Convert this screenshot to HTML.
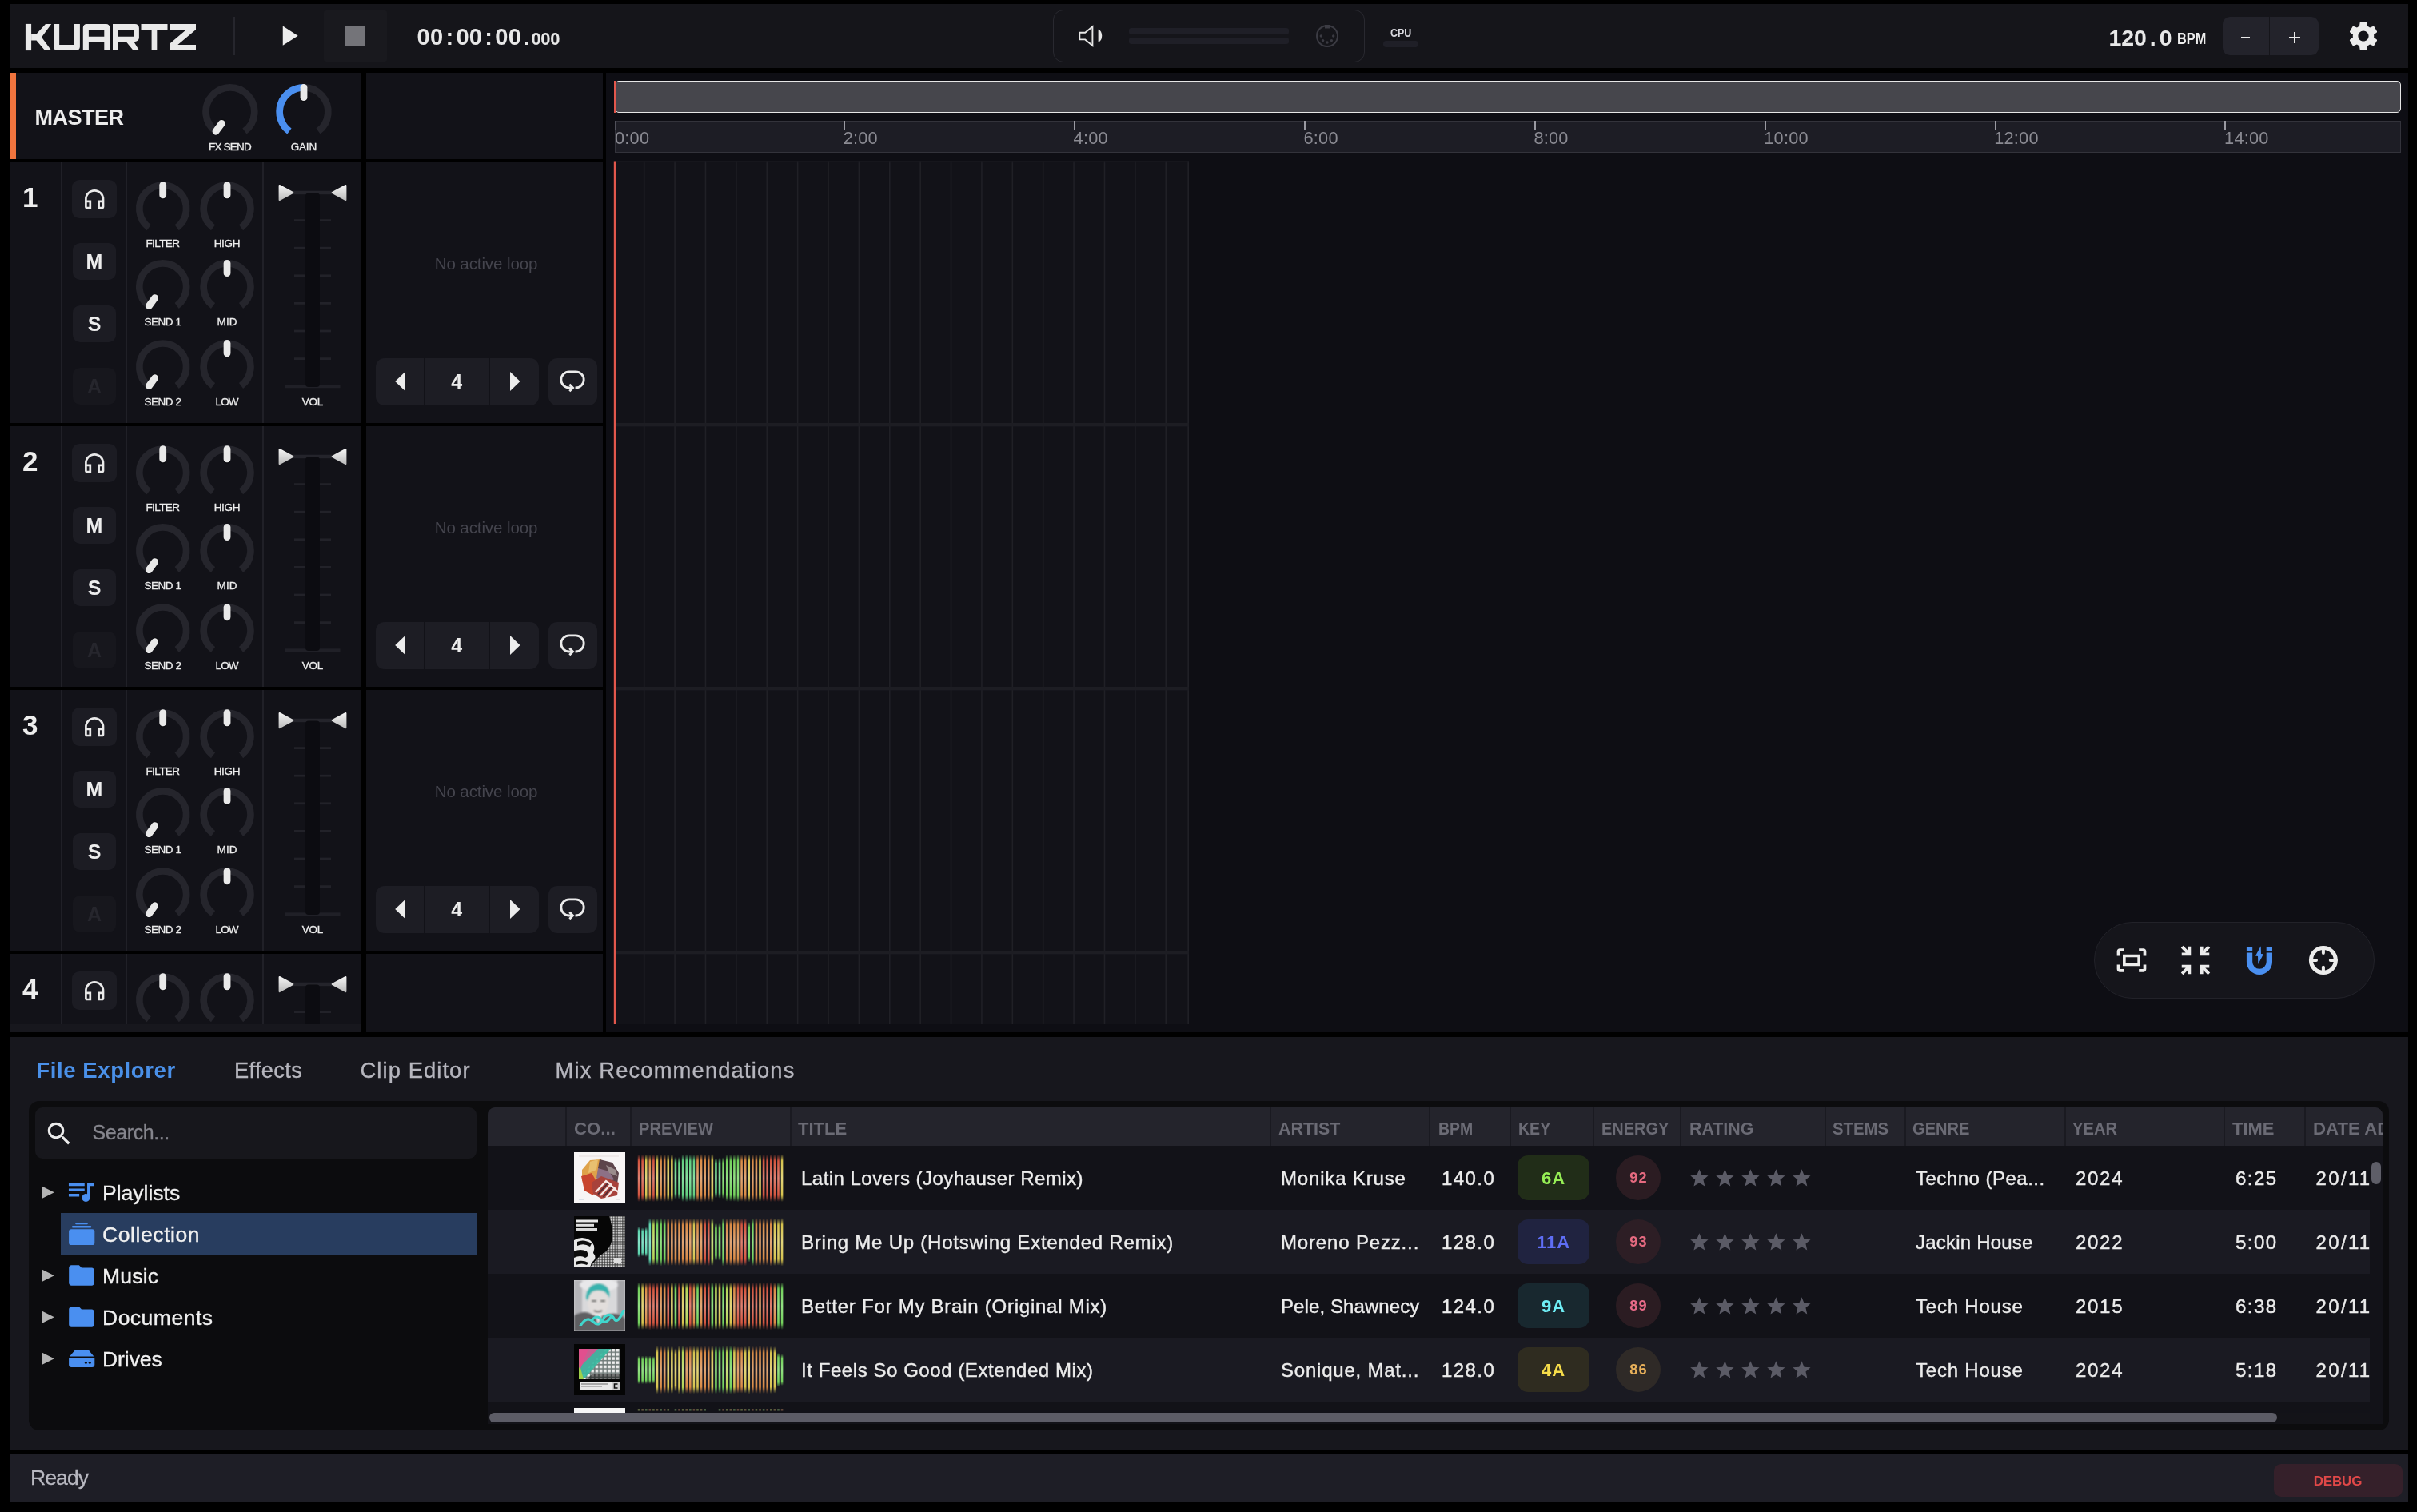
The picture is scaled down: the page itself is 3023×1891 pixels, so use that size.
<!DOCTYPE html>
<html><head><meta charset="utf-8"><title>Kuartz</title>
<style>
html,body{margin:0;padding:0;background:#000;}
body{width:3023px;height:1891px;position:relative;overflow:hidden;font-family:'Liberation Sans', sans-serif;}
div,svg{position:absolute;box-sizing:border-box;}
.t{white-space:nowrap;}
#root{left:0;top:0;width:3023px;height:1891px;will-change:transform;}
</style></head><body><div id="root">

<div style="left:12px;top:5px;width:3000px;height:80px;background:#15151a;"></div>
<svg style="left:0px;top:0px;" width="300" height="90" viewBox="0 0 300 90"><g fill="#e9e9e9" stroke="none" fill-rule="evenodd">
<rect x="31.9" y="29.9" width="7.2" height="33.2"/>
<polygon points="39.1,42.5 45.5,42.5 57,29.9 64.2,29.9 52,46.4 64.2,63.1 56.1,63.1 45.5,50.5 39.1,50.5"/>
<path d="M67,29.9 V58.6 a4.5,4.5 0 0 0 4.5,4.5 H95.4 a4.5,4.5 0 0 0 4.5,-4.5 V29.9 H92.8 V55.9 H74.15 V29.9 Z"/>
<path d="M103.8,63.1 V34.4 a4.5,4.5 0 0 1 4.5,-4.5 H132.8 a4.5,4.5 0 0 1 4.5,4.5 V63.1 H130.3 V52 H110.9 V63.1 Z M110.9,37.1 H130.3 V45.8 H110.9 Z"/>
<path d="M141,63.1 V29.9 H168.9 a5,5 0 0 1 5,5 V47 a5,5 0 0 1 -5,5 H167.3 L174,63.1 H166.7 L157.6,52 H147.9 V63.1 Z M147.9,37.1 H167 V45.8 H147.9 Z"/>
<path d="M176.5,29.9 H209.5 V36.9 H196.3 V63.1 H189.6 V36.9 H176.5 Z"/>
<path d="M212.1,29.9 H245 V36.9 L222.3,56.1 H245 V63.1 H212.1 V54.8 L233.1,36.9 H212.1 Z"/>
</g></svg>
<div style="left:292px;top:21px;width:2px;height:48px;background:#26262d;"></div>
<svg style="left:340.2px;top:24.4px;" width="41.3" height="41.3" viewBox="0 0 24 24"><path fill="#ededed" d="M8 5v14l11-7z"/></svg>
<div style="left:404.5px;top:12.5px;width:79.5px;height:64px;background:#19191e;border-radius:3px;"></div>
<div style="left:432px;top:33px;width:24px;height:24px;background:#747479;"></div>
<div class="t" style="left:521.5px;top:32.19px;font-size:29px;line-height:29px;color:#e8e8e8;font-weight:700;"><span style="display:inline-block;width:16.3px;text-align:center">0</span><span style="display:inline-block;width:16.3px;text-align:center">0</span><span style="display:inline-block;width:16.3px;text-align:center">:</span><span style="display:inline-block;width:16.3px;text-align:center">0</span><span style="display:inline-block;width:16.3px;text-align:center">0</span><span style="display:inline-block;width:16.3px;text-align:center">:</span><span style="display:inline-block;width:16.3px;text-align:center">0</span><span style="display:inline-block;width:16.3px;text-align:center">0</span></div>
<div class="t" style="left:652.5px;top:38.02px;font-size:22px;line-height:22px;color:#e8e8e8;font-weight:700;"><span style="display:inline-block;width:11.9px;text-align:center">.</span><span style="display:inline-block;width:11.9px;text-align:center">0</span><span style="display:inline-block;width:11.9px;text-align:center">0</span><span style="display:inline-block;width:11.9px;text-align:center">0</span></div>
<div style="left:1317px;top:12px;width:390px;height:66px;border:1.5px solid #292930;border-radius:13px;"></div>
<svg style="left:1340px;top:25px;" width="46" height="40" viewBox="1340 25 46 40"><path d="M1350.3 40.7 H1357.2 L1366.4 33.2 V56.9 L1357.2 49.4 H1350.3 Z" fill="none" stroke="#e6e6e6" stroke-width="1.9" stroke-linejoin="miter"/><path d="M1373.6 36.8 A5.2 8 0 0 1 1373.6 52.7 Z" fill="#e6e6e6"/></svg>
<div style="left:1412.4px;top:35.4px;width:199.6px;height:8px;background:#1f1f27;border-radius:3px;"></div>
<div style="left:1412.4px;top:46.7px;width:199.6px;height:8px;background:#1f1f27;border-radius:3px;"></div>
<svg style="left:1644px;top:29px;" width="32" height="32" viewBox="0 0 32 32"><circle cx="16" cy="16" r="13" fill="none" stroke="#3b3b43" stroke-width="2"/>
<rect x="13" y="2" width="6" height="4.5" fill="#3b3b43"/>
<g fill="#3b3b43"><circle cx="8.3" cy="16" r="1.7"/><circle cx="23.7" cy="16" r="1.7"/><circle cx="10.6" cy="21.6" r="1.7"/><circle cx="21.4" cy="21.6" r="1.7"/><circle cx="16" cy="24" r="1.7"/></g></svg>
<div class="t" style="left:1738.6px;top:33.1px;font-size:15px;line-height:15px;color:#d8d8de;font-weight:700;transform-origin:0 0;transform:scaleX(0.83);">CPU</div>
<div style="left:1730px;top:51.3px;width:44px;height:7.4px;background:#1f1f27;border-radius:3.7px;"></div>
<div class="t" style="left:2637.5px;top:32.65px;font-size:28.5px;line-height:28.5px;color:#e8e8e8;font-weight:700;"><span style="display:inline-block;width:15.8px;text-align:center">1</span><span style="display:inline-block;width:15.8px;text-align:center">2</span><span style="display:inline-block;width:15.8px;text-align:center">0</span><span style="display:inline-block;width:15.8px;text-align:center">.</span><span style="display:inline-block;width:15.8px;text-align:center">0</span></div>
<div class="t" style="left:2722.7px;top:38.9px;font-size:19.4px;line-height:19.4px;color:#ededed;font-weight:700;transform-origin:0 0;transform:scaleX(0.84);">BPM</div>
<div style="left:2780px;top:21px;width:120px;height:48px;background:#23232b;border-radius:9px;"></div>
<div style="left:2837.5px;top:21px;width:1.5px;height:48px;background:#15151a;"></div>
<div style="left:2803.4px;top:45.8px;width:11px;height:2.4px;background:#e8e8e8;"></div>
<div style="left:2863.4px;top:45.8px;width:13.4px;height:2.4px;background:#e8e8e8;"></div>
<div style="left:2868.9px;top:40px;width:2.4px;height:14px;background:#e8e8e8;"></div>
<svg style="left:2934px;top:22.5px;" width="44" height="44" viewBox="0 0 24 24"><path fill="#ececec" d="M19.14 12.94c.04-.3.06-.61.06-.94 0-.32-.02-.64-.07-.94l2.03-1.58c.18-.14.23-.41.12-.61l-1.92-3.32c-.12-.22-.37-.29-.59-.22l-2.39.96c-.5-.38-1.03-.7-1.62-.94l-.36-2.54c-.04-.24-.24-.41-.48-.41h-3.84c-.24 0-.43.17-.47.41l-.36 2.54c-.59.24-1.13.57-1.62.94l-2.39-.96c-.22-.08-.47 0-.59.22L2.74 8.87c-.12.21-.08.47.12.61l2.03 1.58c-.05.3-.09.63-.09.94s.02.64.07.94l-2.03 1.58c-.18.14-.23.41-.12.61l1.92 3.32c.12.22.37.29.59.22l2.39-.96c.5.38 1.03.7 1.62.94l.36 2.54c.05.24.24.41.48.41h3.84c.24 0 .44-.17.47-.41l.36-2.54c.59-.24 1.13-.56 1.62-.94l2.39.96c.22.08.47 0 .59-.22l1.92-3.32c.12-.22.07-.47-.12-.61l-2.01-1.58zM12 15.6c-1.98 0-3.6-1.62-3.6-3.6s1.62-3.6 3.6-3.6 3.6 1.62 3.6 3.6-1.62 3.6-3.6 3.6z"/></svg>
<div style="left:12px;top:91px;width:440px;height:107.8px;background:#121218;"></div>
<div style="left:12px;top:91px;width:8px;height:107.8px;background:#f0743e;"></div>
<div style="left:458px;top:91px;width:296px;height:107.8px;background:#121218;"></div>
<div class="t" style="top:134.23px;font-size:27px;line-height:27px;color:#ececec;font-weight:700;letter-spacing:-0.46px;left:43.4px;">MASTER</div>
<svg style="left:12px;top:91px" width="440" height="108" viewBox="12 91 440 108"><path d="M269.85,164.10 A30.35,30.35 0 1 1 305.95,164.10" fill="none" stroke="#25252c" stroke-width="8.7"/><g transform="rotate(-144 287.9 139.7)"><rect x="283.50" y="106.35" width="8.8" height="21.1" rx="4.4" fill="#000" opacity="0.35"/><rect x="283.50" y="104.95" width="8.8" height="21.1" rx="4.4" fill="#e9e9e9"/></g><path d="M361.95,164.10 A30.35,30.35 0 1 1 398.05,164.10" fill="none" stroke="#25252c" stroke-width="8.7"/><path d="M361.95,164.10 A30.35,30.35 0 0 1 380.00,109.35" fill="none" stroke="#4a8ff0" stroke-width="8.7"/><g transform="rotate(0 380 139.7)"><rect x="375.60" y="106.35" width="8.8" height="21.1" rx="4.4" fill="#000" opacity="0.35"/><rect x="375.60" y="104.95" width="8.8" height="21.1" rx="4.4" fill="#e9e9e9"/></g></svg>
<div class="t" style="top:177.21px;font-size:13.5px;line-height:13.5px;color:#ececec;letter-spacing:-0.785px;left:287.508px;transform:translateX(-50%);-webkit-text-stroke:0.3px #ececec;">FX SEND</div>
<div class="t" style="top:177.21px;font-size:13.5px;line-height:13.5px;color:#ececec;letter-spacing:-0.235px;left:379.883px;transform:translateX(-50%);-webkit-text-stroke:0.3px #ececec;">GAIN</div>
<svg width="0" height="0" style="left:0;top:0"><defs><linearGradient id="tg" x1="0" y1="0" x2="0" y2="1"><stop offset="0" stop-color="#f4f4f4"/><stop offset="1" stop-color="#bdbdbd"/></linearGradient></defs></svg>
<svg width="0" height="0" style="left:0;top:0"><defs><linearGradient id="wr" x1="0" y1="0" x2="0" y2="1"><stop offset="0" stop-color="#d4553f" stop-opacity="0"/><stop offset="0.14" stop-color="#d4553f"/><stop offset="0.5" stop-color="#dd8070"/><stop offset="0.86" stop-color="#d4553f"/><stop offset="1" stop-color="#d4553f" stop-opacity="0"/></linearGradient><linearGradient id="wo" x1="0" y1="0" x2="0" y2="1"><stop offset="0" stop-color="#d98a45" stop-opacity="0"/><stop offset="0.14" stop-color="#d98a45"/><stop offset="0.5" stop-color="#e0a676"/><stop offset="0.86" stop-color="#d98a45"/><stop offset="1" stop-color="#d98a45" stop-opacity="0"/></linearGradient><linearGradient id="wy" x1="0" y1="0" x2="0" y2="1"><stop offset="0" stop-color="#d6c34e" stop-opacity="0"/><stop offset="0.14" stop-color="#d6c34e"/><stop offset="0.5" stop-color="#e2d47c"/><stop offset="0.86" stop-color="#d6c34e"/><stop offset="1" stop-color="#d6c34e" stop-opacity="0"/></linearGradient><linearGradient id="wg" x1="0" y1="0" x2="0" y2="1"><stop offset="0" stop-color="#73d15c" stop-opacity="0"/><stop offset="0.14" stop-color="#73d15c"/><stop offset="0.5" stop-color="#93e084"/><stop offset="0.86" stop-color="#73d15c"/><stop offset="1" stop-color="#73d15c" stop-opacity="0"/></linearGradient><linearGradient id="wc" x1="0" y1="0" x2="0" y2="1"><stop offset="0" stop-color="#5fd6b0" stop-opacity="0"/><stop offset="0.14" stop-color="#5fd6b0"/><stop offset="0.5" stop-color="#86e2c8"/><stop offset="0.86" stop-color="#5fd6b0"/><stop offset="1" stop-color="#5fd6b0" stop-opacity="0"/></linearGradient><linearGradient id="wt" x1="0" y1="0" x2="0" y2="1"><stop offset="0" stop-color="#62cf80" stop-opacity="0"/><stop offset="0.14" stop-color="#62cf80"/><stop offset="0.5" stop-color="#88dea0"/><stop offset="0.86" stop-color="#62cf80"/><stop offset="1" stop-color="#62cf80" stop-opacity="0"/></linearGradient><linearGradient id="wl" x1="0" y1="0" x2="0" y2="1"><stop offset="0" stop-color="#b4d455" stop-opacity="0"/><stop offset="0.14" stop-color="#b4d455"/><stop offset="0.5" stop-color="#c8e080"/><stop offset="0.86" stop-color="#b4d455"/><stop offset="1" stop-color="#b4d455" stop-opacity="0"/></linearGradient><filter id="wbl" x="-5%" y="-5%" width="110%" height="110%"><feGaussianBlur stdDeviation="0.5 0.6"/></filter></defs><defs><filter id="cbl" x="-5%" y="-5%" width="110%" height="110%"><feGaussianBlur stdDeviation="0.55"/></filter><filter id="cbl2" x="-5%" y="-5%" width="110%" height="110%"><feGaussianBlur stdDeviation="1.3"/></filter><pattern id="dots" width="3.2" height="3.2" patternUnits="userSpaceOnUse"><rect width="3.2" height="3.2" fill="#4a4a4a"/><circle cx="1.6" cy="1.6" r="1.15" fill="#d2d2d2"/></pattern><pattern id="chk" width="5.2" height="5.2" patternUnits="userSpaceOnUse"><rect width="5.2" height="5.2" fill="#6f7a78"/><rect x="0.6" y="0.6" width="3.6" height="3.6" fill="#f0f0f0"/></pattern></defs></svg>
<div style="left:12px;top:203px;width:742px;height:326px;overflow:hidden;">
<div style="left:0px;top:0px;width:440px;height:326px;background:#121218;"></div>
<div style="left:446px;top:0px;width:296px;height:326px;background:#121218;"></div>
<div style="left:64.4px;top:0px;width:1.5px;height:326px;background:#202027;"></div>
<div style="left:145.7px;top:0px;width:1.5px;height:326px;background:#202027;"></div>
<div style="left:316.3px;top:0px;width:1.5px;height:326px;background:#202027;"></div>
<div class="t" style="top:26.49px;font-size:35px;line-height:35px;color:#ededed;font-weight:700;left:25.8px;transform:translateX(-50%);">1</div>
<div style="left:78px;top:22px;width:56px;height:48px;background:#1c1c23;border-radius:9px;"></div>
<svg style="left:89.9px;top:29.8px;" width="32.4" height="32.4" viewBox="0 0 24 24"><path fill="#eaeaea" d="M12 3a9 9 0 0 0-9 9v7c0 1.1.9 2 2 2h4v-8H5v-1c0-3.87 3.13-7 7-7s7 3.13 7 7v1h-4v8h4c1.1 0 2-.9 2-2v-7a9 9 0 0 0-9-9zM7 15v4H5v-4h2zm12 4h-2v-4h2v4z"/></svg>
<div style="left:79px;top:101px;width:54px;height:46px;background:#1c1c23;border-radius:9px;"></div>
<div class="t" style="top:112.06px;font-size:25px;line-height:25px;color:#ededed;font-weight:700;left:106px;transform:translateX(-50%);">M</div>
<div style="left:79px;top:179px;width:54px;height:46px;background:#1c1c23;border-radius:9px;"></div>
<div class="t" style="top:190.06px;font-size:25px;line-height:25px;color:#ededed;font-weight:700;left:106px;transform:translateX(-50%);">S</div>
<div style="left:79px;top:257px;width:54px;height:46px;background:#17171d;border-radius:9px;"></div>
<div class="t" style="top:268.06px;font-size:25px;line-height:25px;color:#26262d;font-weight:700;left:106px;transform:translateX(-50%);">A</div>
<svg style="left:0;top:0" width="742" height="326" viewBox="12 0 742 326"><path d="M186.21,81.63 A29.4,29.4 0 1 1 221.19,81.63" fill="none" stroke="#25252c" stroke-width="8.7"/><g transform="rotate(0 203.7 58)"><rect x="199.30" y="25.60" width="8.8" height="21.1" rx="4.4" fill="#000" opacity="0.35"/><rect x="199.30" y="24.20" width="8.8" height="21.1" rx="4.4" fill="#e9e9e9"/></g><path d="M266.56,81.63 A29.4,29.4 0 1 1 301.54,81.63" fill="none" stroke="#25252c" stroke-width="8.7"/><g transform="rotate(0 284.05 58)"><rect x="279.65" y="25.60" width="8.8" height="21.1" rx="4.4" fill="#000" opacity="0.35"/><rect x="279.65" y="24.20" width="8.8" height="21.1" rx="4.4" fill="#e9e9e9"/></g><path d="M186.21,179.43 A29.4,29.4 0 1 1 221.19,179.43" fill="none" stroke="#25252c" stroke-width="8.7"/><g transform="rotate(-144 203.7 155.8)"><rect x="199.30" y="123.40" width="8.8" height="21.1" rx="4.4" fill="#000" opacity="0.35"/><rect x="199.30" y="122.00" width="8.8" height="21.1" rx="4.4" fill="#e9e9e9"/></g><path d="M266.56,179.43 A29.4,29.4 0 1 1 301.54,179.43" fill="none" stroke="#25252c" stroke-width="8.7"/><g transform="rotate(0 284.05 155.8)"><rect x="279.65" y="123.40" width="8.8" height="21.1" rx="4.4" fill="#000" opacity="0.35"/><rect x="279.65" y="122.00" width="8.8" height="21.1" rx="4.4" fill="#e9e9e9"/></g><path d="M186.21,279.53 A29.4,29.4 0 1 1 221.19,279.53" fill="none" stroke="#25252c" stroke-width="8.7"/><g transform="rotate(-144 203.7 255.9)"><rect x="199.30" y="223.50" width="8.8" height="21.1" rx="4.4" fill="#000" opacity="0.35"/><rect x="199.30" y="222.10" width="8.8" height="21.1" rx="4.4" fill="#e9e9e9"/></g><path d="M266.56,279.53 A29.4,29.4 0 1 1 301.54,279.53" fill="none" stroke="#25252c" stroke-width="8.7"/><g transform="rotate(0 284.05 255.9)"><rect x="279.65" y="223.50" width="8.8" height="21.1" rx="4.4" fill="#000" opacity="0.35"/><rect x="279.65" y="222.10" width="8.8" height="21.1" rx="4.4" fill="#e9e9e9"/></g><rect x="367" y="35.7" width="48" height="4.5" fill="#24242b"/><rect x="356.5" y="278.3" width="69" height="4" fill="#202027"/><rect x="368" y="71.19999999999999" width="46" height="2.8" fill="#222229"/><rect x="368" y="105.8" width="46" height="2.8" fill="#222229"/><rect x="368" y="140.4" width="46" height="2.8" fill="#222229"/><rect x="368" y="175.0" width="46" height="2.8" fill="#222229"/><rect x="368" y="209.6" width="46" height="2.8" fill="#222229"/><rect x="368" y="244.2" width="46" height="2.8" fill="#222229"/><rect x="382" y="38.4" width="18" height="242.6" rx="4" fill="#0c0c11"/><path d="M349.6,28.9 L366.3,38 L349.6,47.1 Z" fill="url(#tg)" stroke="url(#tg)" stroke-width="2" stroke-linejoin="round"/><path d="M432.4,28.9 L415.7,38 L432.4,47.1 Z" fill="url(#tg)" stroke="url(#tg)" stroke-width="2" stroke-linejoin="round"/></svg>
<div class="t" style="top:94.61px;font-size:13.5px;line-height:13.5px;color:#ececec;letter-spacing:-0.581px;left:191.41px;transform:translateX(-50%);-webkit-text-stroke:0.3px #ececec;">FILTER</div>
<div class="t" style="top:94.61px;font-size:13.5px;line-height:13.5px;color:#ececec;letter-spacing:-0.317px;left:271.892px;transform:translateX(-50%);-webkit-text-stroke:0.3px #ececec;">HIGH</div>
<div class="t" style="top:192.71px;font-size:13.5px;line-height:13.5px;color:#ececec;letter-spacing:-0.453px;left:191.473px;transform:translateX(-50%);-webkit-text-stroke:0.3px #ececec;">SEND 1</div>
<div class="t" style="top:192.71px;font-size:13.5px;line-height:13.5px;color:#ececec;letter-spacing:0.127px;left:272.113px;transform:translateX(-50%);-webkit-text-stroke:0.3px #ececec;">MID</div>
<div class="t" style="top:292.81px;font-size:13.5px;line-height:13.5px;color:#ececec;letter-spacing:-0.453px;left:191.473px;transform:translateX(-50%);-webkit-text-stroke:0.3px #ececec;">SEND 2</div>
<div class="t" style="top:292.81px;font-size:13.5px;line-height:13.5px;color:#ececec;letter-spacing:-0.825px;left:271.637px;transform:translateX(-50%);-webkit-text-stroke:0.3px #ececec;">LOW</div>
<div class="t" style="top:292.91px;font-size:13.5px;line-height:13.5px;color:#ececec;letter-spacing:-0.256px;left:378.872px;transform:translateX(-50%);-webkit-text-stroke:0.3px #ececec;">VOL</div>
<div class="t" style="top:116.89px;font-size:20.5px;line-height:20.5px;color:#44444d;letter-spacing:-0.093px;left:596px;transform:translateX(-50%);">No active loop</div>
<div style="left:458px;top:244.5px;width:204px;height:59.5px;background:#1d1d24;border-radius:11px;"></div>
<div style="left:517.6px;top:244.5px;width:1.6px;height:59.5px;background:#121218;"></div>
<div style="left:599.8px;top:244.5px;width:1.6px;height:59.5px;background:#121218;"></div>
<svg style="left:0;top:0" width="742" height="326" viewBox="12 0 742 326"><path d="M506.7,262 L494.2,274 L506.7,286 Z" fill="#ececec"/><path d="M638,262 L650.5,274 L638,286 Z" fill="#ececec"/></svg>
<div class="t" style="top:262.36px;font-size:25px;line-height:25px;color:#ececec;font-weight:700;left:559.2px;transform:translateX(-50%);">4</div>
<div style="left:674px;top:244.5px;width:60.5px;height:59.5px;background:#1d1d24;border-radius:11px;"></div>
<svg style="left:687px;top:257.5px;" width="34" height="34" viewBox="0 0 24 24"><path d="M11.6 16.95 H9.1 A7.1 7.1 0 0 1 9.1 2.75 H14.9 A7.1 7.1 0 0 1 14.9 16.95 H14.5" fill="none" stroke="#ececec" stroke-width="2"/><path d="M9.4 13.9 L12.4 16.95 L9.4 20" fill="none" stroke="#ececec" stroke-width="2"/></svg>
</div>
<div style="left:12px;top:533px;width:742px;height:326px;overflow:hidden;">
<div style="left:0px;top:0px;width:440px;height:326px;background:#121218;"></div>
<div style="left:446px;top:0px;width:296px;height:326px;background:#121218;"></div>
<div style="left:64.4px;top:0px;width:1.5px;height:326px;background:#202027;"></div>
<div style="left:145.7px;top:0px;width:1.5px;height:326px;background:#202027;"></div>
<div style="left:316.3px;top:0px;width:1.5px;height:326px;background:#202027;"></div>
<div class="t" style="top:26.49px;font-size:35px;line-height:35px;color:#ededed;font-weight:700;left:25.8px;transform:translateX(-50%);">2</div>
<div style="left:78px;top:22px;width:56px;height:48px;background:#1c1c23;border-radius:9px;"></div>
<svg style="left:89.9px;top:29.8px;" width="32.4" height="32.4" viewBox="0 0 24 24"><path fill="#eaeaea" d="M12 3a9 9 0 0 0-9 9v7c0 1.1.9 2 2 2h4v-8H5v-1c0-3.87 3.13-7 7-7s7 3.13 7 7v1h-4v8h4c1.1 0 2-.9 2-2v-7a9 9 0 0 0-9-9zM7 15v4H5v-4h2zm12 4h-2v-4h2v4z"/></svg>
<div style="left:79px;top:101px;width:54px;height:46px;background:#1c1c23;border-radius:9px;"></div>
<div class="t" style="top:112.06px;font-size:25px;line-height:25px;color:#ededed;font-weight:700;left:106px;transform:translateX(-50%);">M</div>
<div style="left:79px;top:179px;width:54px;height:46px;background:#1c1c23;border-radius:9px;"></div>
<div class="t" style="top:190.06px;font-size:25px;line-height:25px;color:#ededed;font-weight:700;left:106px;transform:translateX(-50%);">S</div>
<div style="left:79px;top:257px;width:54px;height:46px;background:#17171d;border-radius:9px;"></div>
<div class="t" style="top:268.06px;font-size:25px;line-height:25px;color:#26262d;font-weight:700;left:106px;transform:translateX(-50%);">A</div>
<svg style="left:0;top:0" width="742" height="326" viewBox="12 0 742 326"><path d="M186.21,81.63 A29.4,29.4 0 1 1 221.19,81.63" fill="none" stroke="#25252c" stroke-width="8.7"/><g transform="rotate(0 203.7 58)"><rect x="199.30" y="25.60" width="8.8" height="21.1" rx="4.4" fill="#000" opacity="0.35"/><rect x="199.30" y="24.20" width="8.8" height="21.1" rx="4.4" fill="#e9e9e9"/></g><path d="M266.56,81.63 A29.4,29.4 0 1 1 301.54,81.63" fill="none" stroke="#25252c" stroke-width="8.7"/><g transform="rotate(0 284.05 58)"><rect x="279.65" y="25.60" width="8.8" height="21.1" rx="4.4" fill="#000" opacity="0.35"/><rect x="279.65" y="24.20" width="8.8" height="21.1" rx="4.4" fill="#e9e9e9"/></g><path d="M186.21,179.43 A29.4,29.4 0 1 1 221.19,179.43" fill="none" stroke="#25252c" stroke-width="8.7"/><g transform="rotate(-144 203.7 155.8)"><rect x="199.30" y="123.40" width="8.8" height="21.1" rx="4.4" fill="#000" opacity="0.35"/><rect x="199.30" y="122.00" width="8.8" height="21.1" rx="4.4" fill="#e9e9e9"/></g><path d="M266.56,179.43 A29.4,29.4 0 1 1 301.54,179.43" fill="none" stroke="#25252c" stroke-width="8.7"/><g transform="rotate(0 284.05 155.8)"><rect x="279.65" y="123.40" width="8.8" height="21.1" rx="4.4" fill="#000" opacity="0.35"/><rect x="279.65" y="122.00" width="8.8" height="21.1" rx="4.4" fill="#e9e9e9"/></g><path d="M186.21,279.53 A29.4,29.4 0 1 1 221.19,279.53" fill="none" stroke="#25252c" stroke-width="8.7"/><g transform="rotate(-144 203.7 255.9)"><rect x="199.30" y="223.50" width="8.8" height="21.1" rx="4.4" fill="#000" opacity="0.35"/><rect x="199.30" y="222.10" width="8.8" height="21.1" rx="4.4" fill="#e9e9e9"/></g><path d="M266.56,279.53 A29.4,29.4 0 1 1 301.54,279.53" fill="none" stroke="#25252c" stroke-width="8.7"/><g transform="rotate(0 284.05 255.9)"><rect x="279.65" y="223.50" width="8.8" height="21.1" rx="4.4" fill="#000" opacity="0.35"/><rect x="279.65" y="222.10" width="8.8" height="21.1" rx="4.4" fill="#e9e9e9"/></g><rect x="367" y="35.7" width="48" height="4.5" fill="#24242b"/><rect x="356.5" y="278.3" width="69" height="4" fill="#202027"/><rect x="368" y="71.19999999999999" width="46" height="2.8" fill="#222229"/><rect x="368" y="105.8" width="46" height="2.8" fill="#222229"/><rect x="368" y="140.4" width="46" height="2.8" fill="#222229"/><rect x="368" y="175.0" width="46" height="2.8" fill="#222229"/><rect x="368" y="209.6" width="46" height="2.8" fill="#222229"/><rect x="368" y="244.2" width="46" height="2.8" fill="#222229"/><rect x="382" y="38.4" width="18" height="242.6" rx="4" fill="#0c0c11"/><path d="M349.6,28.9 L366.3,38 L349.6,47.1 Z" fill="url(#tg)" stroke="url(#tg)" stroke-width="2" stroke-linejoin="round"/><path d="M432.4,28.9 L415.7,38 L432.4,47.1 Z" fill="url(#tg)" stroke="url(#tg)" stroke-width="2" stroke-linejoin="round"/></svg>
<div class="t" style="top:94.61px;font-size:13.5px;line-height:13.5px;color:#ececec;letter-spacing:-0.581px;left:191.41px;transform:translateX(-50%);-webkit-text-stroke:0.3px #ececec;">FILTER</div>
<div class="t" style="top:94.61px;font-size:13.5px;line-height:13.5px;color:#ececec;letter-spacing:-0.317px;left:271.892px;transform:translateX(-50%);-webkit-text-stroke:0.3px #ececec;">HIGH</div>
<div class="t" style="top:192.71px;font-size:13.5px;line-height:13.5px;color:#ececec;letter-spacing:-0.453px;left:191.473px;transform:translateX(-50%);-webkit-text-stroke:0.3px #ececec;">SEND 1</div>
<div class="t" style="top:192.71px;font-size:13.5px;line-height:13.5px;color:#ececec;letter-spacing:0.127px;left:272.113px;transform:translateX(-50%);-webkit-text-stroke:0.3px #ececec;">MID</div>
<div class="t" style="top:292.81px;font-size:13.5px;line-height:13.5px;color:#ececec;letter-spacing:-0.453px;left:191.473px;transform:translateX(-50%);-webkit-text-stroke:0.3px #ececec;">SEND 2</div>
<div class="t" style="top:292.81px;font-size:13.5px;line-height:13.5px;color:#ececec;letter-spacing:-0.825px;left:271.637px;transform:translateX(-50%);-webkit-text-stroke:0.3px #ececec;">LOW</div>
<div class="t" style="top:292.91px;font-size:13.5px;line-height:13.5px;color:#ececec;letter-spacing:-0.256px;left:378.872px;transform:translateX(-50%);-webkit-text-stroke:0.3px #ececec;">VOL</div>
<div class="t" style="top:116.89px;font-size:20.5px;line-height:20.5px;color:#44444d;letter-spacing:-0.093px;left:596px;transform:translateX(-50%);">No active loop</div>
<div style="left:458px;top:244.5px;width:204px;height:59.5px;background:#1d1d24;border-radius:11px;"></div>
<div style="left:517.6px;top:244.5px;width:1.6px;height:59.5px;background:#121218;"></div>
<div style="left:599.8px;top:244.5px;width:1.6px;height:59.5px;background:#121218;"></div>
<svg style="left:0;top:0" width="742" height="326" viewBox="12 0 742 326"><path d="M506.7,262 L494.2,274 L506.7,286 Z" fill="#ececec"/><path d="M638,262 L650.5,274 L638,286 Z" fill="#ececec"/></svg>
<div class="t" style="top:262.36px;font-size:25px;line-height:25px;color:#ececec;font-weight:700;left:559.2px;transform:translateX(-50%);">4</div>
<div style="left:674px;top:244.5px;width:60.5px;height:59.5px;background:#1d1d24;border-radius:11px;"></div>
<svg style="left:687px;top:257.5px;" width="34" height="34" viewBox="0 0 24 24"><path d="M11.6 16.95 H9.1 A7.1 7.1 0 0 1 9.1 2.75 H14.9 A7.1 7.1 0 0 1 14.9 16.95 H14.5" fill="none" stroke="#ececec" stroke-width="2"/><path d="M9.4 13.9 L12.4 16.95 L9.4 20" fill="none" stroke="#ececec" stroke-width="2"/></svg>
</div>
<div style="left:12px;top:863px;width:742px;height:326px;overflow:hidden;">
<div style="left:0px;top:0px;width:440px;height:326px;background:#121218;"></div>
<div style="left:446px;top:0px;width:296px;height:326px;background:#121218;"></div>
<div style="left:64.4px;top:0px;width:1.5px;height:326px;background:#202027;"></div>
<div style="left:145.7px;top:0px;width:1.5px;height:326px;background:#202027;"></div>
<div style="left:316.3px;top:0px;width:1.5px;height:326px;background:#202027;"></div>
<div class="t" style="top:26.49px;font-size:35px;line-height:35px;color:#ededed;font-weight:700;left:25.8px;transform:translateX(-50%);">3</div>
<div style="left:78px;top:22px;width:56px;height:48px;background:#1c1c23;border-radius:9px;"></div>
<svg style="left:89.9px;top:29.8px;" width="32.4" height="32.4" viewBox="0 0 24 24"><path fill="#eaeaea" d="M12 3a9 9 0 0 0-9 9v7c0 1.1.9 2 2 2h4v-8H5v-1c0-3.87 3.13-7 7-7s7 3.13 7 7v1h-4v8h4c1.1 0 2-.9 2-2v-7a9 9 0 0 0-9-9zM7 15v4H5v-4h2zm12 4h-2v-4h2v4z"/></svg>
<div style="left:79px;top:101px;width:54px;height:46px;background:#1c1c23;border-radius:9px;"></div>
<div class="t" style="top:112.06px;font-size:25px;line-height:25px;color:#ededed;font-weight:700;left:106px;transform:translateX(-50%);">M</div>
<div style="left:79px;top:179px;width:54px;height:46px;background:#1c1c23;border-radius:9px;"></div>
<div class="t" style="top:190.06px;font-size:25px;line-height:25px;color:#ededed;font-weight:700;left:106px;transform:translateX(-50%);">S</div>
<div style="left:79px;top:257px;width:54px;height:46px;background:#17171d;border-radius:9px;"></div>
<div class="t" style="top:268.06px;font-size:25px;line-height:25px;color:#26262d;font-weight:700;left:106px;transform:translateX(-50%);">A</div>
<svg style="left:0;top:0" width="742" height="326" viewBox="12 0 742 326"><path d="M186.21,81.63 A29.4,29.4 0 1 1 221.19,81.63" fill="none" stroke="#25252c" stroke-width="8.7"/><g transform="rotate(0 203.7 58)"><rect x="199.30" y="25.60" width="8.8" height="21.1" rx="4.4" fill="#000" opacity="0.35"/><rect x="199.30" y="24.20" width="8.8" height="21.1" rx="4.4" fill="#e9e9e9"/></g><path d="M266.56,81.63 A29.4,29.4 0 1 1 301.54,81.63" fill="none" stroke="#25252c" stroke-width="8.7"/><g transform="rotate(0 284.05 58)"><rect x="279.65" y="25.60" width="8.8" height="21.1" rx="4.4" fill="#000" opacity="0.35"/><rect x="279.65" y="24.20" width="8.8" height="21.1" rx="4.4" fill="#e9e9e9"/></g><path d="M186.21,179.43 A29.4,29.4 0 1 1 221.19,179.43" fill="none" stroke="#25252c" stroke-width="8.7"/><g transform="rotate(-144 203.7 155.8)"><rect x="199.30" y="123.40" width="8.8" height="21.1" rx="4.4" fill="#000" opacity="0.35"/><rect x="199.30" y="122.00" width="8.8" height="21.1" rx="4.4" fill="#e9e9e9"/></g><path d="M266.56,179.43 A29.4,29.4 0 1 1 301.54,179.43" fill="none" stroke="#25252c" stroke-width="8.7"/><g transform="rotate(0 284.05 155.8)"><rect x="279.65" y="123.40" width="8.8" height="21.1" rx="4.4" fill="#000" opacity="0.35"/><rect x="279.65" y="122.00" width="8.8" height="21.1" rx="4.4" fill="#e9e9e9"/></g><path d="M186.21,279.53 A29.4,29.4 0 1 1 221.19,279.53" fill="none" stroke="#25252c" stroke-width="8.7"/><g transform="rotate(-144 203.7 255.9)"><rect x="199.30" y="223.50" width="8.8" height="21.1" rx="4.4" fill="#000" opacity="0.35"/><rect x="199.30" y="222.10" width="8.8" height="21.1" rx="4.4" fill="#e9e9e9"/></g><path d="M266.56,279.53 A29.4,29.4 0 1 1 301.54,279.53" fill="none" stroke="#25252c" stroke-width="8.7"/><g transform="rotate(0 284.05 255.9)"><rect x="279.65" y="223.50" width="8.8" height="21.1" rx="4.4" fill="#000" opacity="0.35"/><rect x="279.65" y="222.10" width="8.8" height="21.1" rx="4.4" fill="#e9e9e9"/></g><rect x="367" y="35.7" width="48" height="4.5" fill="#24242b"/><rect x="356.5" y="278.3" width="69" height="4" fill="#202027"/><rect x="368" y="71.19999999999999" width="46" height="2.8" fill="#222229"/><rect x="368" y="105.8" width="46" height="2.8" fill="#222229"/><rect x="368" y="140.4" width="46" height="2.8" fill="#222229"/><rect x="368" y="175.0" width="46" height="2.8" fill="#222229"/><rect x="368" y="209.6" width="46" height="2.8" fill="#222229"/><rect x="368" y="244.2" width="46" height="2.8" fill="#222229"/><rect x="382" y="38.4" width="18" height="242.6" rx="4" fill="#0c0c11"/><path d="M349.6,28.9 L366.3,38 L349.6,47.1 Z" fill="url(#tg)" stroke="url(#tg)" stroke-width="2" stroke-linejoin="round"/><path d="M432.4,28.9 L415.7,38 L432.4,47.1 Z" fill="url(#tg)" stroke="url(#tg)" stroke-width="2" stroke-linejoin="round"/></svg>
<div class="t" style="top:94.61px;font-size:13.5px;line-height:13.5px;color:#ececec;letter-spacing:-0.581px;left:191.41px;transform:translateX(-50%);-webkit-text-stroke:0.3px #ececec;">FILTER</div>
<div class="t" style="top:94.61px;font-size:13.5px;line-height:13.5px;color:#ececec;letter-spacing:-0.317px;left:271.892px;transform:translateX(-50%);-webkit-text-stroke:0.3px #ececec;">HIGH</div>
<div class="t" style="top:192.71px;font-size:13.5px;line-height:13.5px;color:#ececec;letter-spacing:-0.453px;left:191.473px;transform:translateX(-50%);-webkit-text-stroke:0.3px #ececec;">SEND 1</div>
<div class="t" style="top:192.71px;font-size:13.5px;line-height:13.5px;color:#ececec;letter-spacing:0.127px;left:272.113px;transform:translateX(-50%);-webkit-text-stroke:0.3px #ececec;">MID</div>
<div class="t" style="top:292.81px;font-size:13.5px;line-height:13.5px;color:#ececec;letter-spacing:-0.453px;left:191.473px;transform:translateX(-50%);-webkit-text-stroke:0.3px #ececec;">SEND 2</div>
<div class="t" style="top:292.81px;font-size:13.5px;line-height:13.5px;color:#ececec;letter-spacing:-0.825px;left:271.637px;transform:translateX(-50%);-webkit-text-stroke:0.3px #ececec;">LOW</div>
<div class="t" style="top:292.91px;font-size:13.5px;line-height:13.5px;color:#ececec;letter-spacing:-0.256px;left:378.872px;transform:translateX(-50%);-webkit-text-stroke:0.3px #ececec;">VOL</div>
<div class="t" style="top:116.89px;font-size:20.5px;line-height:20.5px;color:#44444d;letter-spacing:-0.093px;left:596px;transform:translateX(-50%);">No active loop</div>
<div style="left:458px;top:244.5px;width:204px;height:59.5px;background:#1d1d24;border-radius:11px;"></div>
<div style="left:517.6px;top:244.5px;width:1.6px;height:59.5px;background:#121218;"></div>
<div style="left:599.8px;top:244.5px;width:1.6px;height:59.5px;background:#121218;"></div>
<svg style="left:0;top:0" width="742" height="326" viewBox="12 0 742 326"><path d="M506.7,262 L494.2,274 L506.7,286 Z" fill="#ececec"/><path d="M638,262 L650.5,274 L638,286 Z" fill="#ececec"/></svg>
<div class="t" style="top:262.36px;font-size:25px;line-height:25px;color:#ececec;font-weight:700;left:559.2px;transform:translateX(-50%);">4</div>
<div style="left:674px;top:244.5px;width:60.5px;height:59.5px;background:#1d1d24;border-radius:11px;"></div>
<svg style="left:687px;top:257.5px;" width="34" height="34" viewBox="0 0 24 24"><path d="M11.6 16.95 H9.1 A7.1 7.1 0 0 1 9.1 2.75 H14.9 A7.1 7.1 0 0 1 14.9 16.95 H14.5" fill="none" stroke="#ececec" stroke-width="2"/><path d="M9.4 13.9 L12.4 16.95 L9.4 20" fill="none" stroke="#ececec" stroke-width="2"/></svg>
</div>
<div style="left:12px;top:1193px;width:742px;height:88px;overflow:hidden;">
<div style="left:0px;top:0px;width:440px;height:326px;background:#121218;"></div>
<div style="left:446px;top:0px;width:296px;height:326px;background:#121218;"></div>
<div style="left:64.4px;top:0px;width:1.5px;height:326px;background:#202027;"></div>
<div style="left:145.7px;top:0px;width:1.5px;height:326px;background:#202027;"></div>
<div style="left:316.3px;top:0px;width:1.5px;height:326px;background:#202027;"></div>
<div class="t" style="top:26.49px;font-size:35px;line-height:35px;color:#ededed;font-weight:700;left:25.8px;transform:translateX(-50%);">4</div>
<div style="left:78px;top:22px;width:56px;height:48px;background:#1c1c23;border-radius:9px;"></div>
<svg style="left:89.9px;top:29.8px;" width="32.4" height="32.4" viewBox="0 0 24 24"><path fill="#eaeaea" d="M12 3a9 9 0 0 0-9 9v7c0 1.1.9 2 2 2h4v-8H5v-1c0-3.87 3.13-7 7-7s7 3.13 7 7v1h-4v8h4c1.1 0 2-.9 2-2v-7a9 9 0 0 0-9-9zM7 15v4H5v-4h2zm12 4h-2v-4h2v4z"/></svg>
<div style="left:79px;top:101px;width:54px;height:46px;background:#1c1c23;border-radius:9px;"></div>
<div class="t" style="top:112.06px;font-size:25px;line-height:25px;color:#ededed;font-weight:700;left:106px;transform:translateX(-50%);">M</div>
<div style="left:79px;top:179px;width:54px;height:46px;background:#1c1c23;border-radius:9px;"></div>
<div class="t" style="top:190.06px;font-size:25px;line-height:25px;color:#ededed;font-weight:700;left:106px;transform:translateX(-50%);">S</div>
<div style="left:79px;top:257px;width:54px;height:46px;background:#17171d;border-radius:9px;"></div>
<div class="t" style="top:268.06px;font-size:25px;line-height:25px;color:#26262d;font-weight:700;left:106px;transform:translateX(-50%);">A</div>
<svg style="left:0;top:0" width="742" height="326" viewBox="12 0 742 326"><path d="M186.21,81.63 A29.4,29.4 0 1 1 221.19,81.63" fill="none" stroke="#25252c" stroke-width="8.7"/><g transform="rotate(0 203.7 58)"><rect x="199.30" y="25.60" width="8.8" height="21.1" rx="4.4" fill="#000" opacity="0.35"/><rect x="199.30" y="24.20" width="8.8" height="21.1" rx="4.4" fill="#e9e9e9"/></g><path d="M266.56,81.63 A29.4,29.4 0 1 1 301.54,81.63" fill="none" stroke="#25252c" stroke-width="8.7"/><g transform="rotate(0 284.05 58)"><rect x="279.65" y="25.60" width="8.8" height="21.1" rx="4.4" fill="#000" opacity="0.35"/><rect x="279.65" y="24.20" width="8.8" height="21.1" rx="4.4" fill="#e9e9e9"/></g><path d="M186.21,179.43 A29.4,29.4 0 1 1 221.19,179.43" fill="none" stroke="#25252c" stroke-width="8.7"/><g transform="rotate(-144 203.7 155.8)"><rect x="199.30" y="123.40" width="8.8" height="21.1" rx="4.4" fill="#000" opacity="0.35"/><rect x="199.30" y="122.00" width="8.8" height="21.1" rx="4.4" fill="#e9e9e9"/></g><path d="M266.56,179.43 A29.4,29.4 0 1 1 301.54,179.43" fill="none" stroke="#25252c" stroke-width="8.7"/><g transform="rotate(0 284.05 155.8)"><rect x="279.65" y="123.40" width="8.8" height="21.1" rx="4.4" fill="#000" opacity="0.35"/><rect x="279.65" y="122.00" width="8.8" height="21.1" rx="4.4" fill="#e9e9e9"/></g><path d="M186.21,279.53 A29.4,29.4 0 1 1 221.19,279.53" fill="none" stroke="#25252c" stroke-width="8.7"/><g transform="rotate(-144 203.7 255.9)"><rect x="199.30" y="223.50" width="8.8" height="21.1" rx="4.4" fill="#000" opacity="0.35"/><rect x="199.30" y="222.10" width="8.8" height="21.1" rx="4.4" fill="#e9e9e9"/></g><path d="M266.56,279.53 A29.4,29.4 0 1 1 301.54,279.53" fill="none" stroke="#25252c" stroke-width="8.7"/><g transform="rotate(0 284.05 255.9)"><rect x="279.65" y="223.50" width="8.8" height="21.1" rx="4.4" fill="#000" opacity="0.35"/><rect x="279.65" y="222.10" width="8.8" height="21.1" rx="4.4" fill="#e9e9e9"/></g><rect x="367" y="35.7" width="48" height="4.5" fill="#24242b"/><rect x="356.5" y="278.3" width="69" height="4" fill="#202027"/><rect x="368" y="71.19999999999999" width="46" height="2.8" fill="#222229"/><rect x="368" y="105.8" width="46" height="2.8" fill="#222229"/><rect x="368" y="140.4" width="46" height="2.8" fill="#222229"/><rect x="368" y="175.0" width="46" height="2.8" fill="#222229"/><rect x="368" y="209.6" width="46" height="2.8" fill="#222229"/><rect x="368" y="244.2" width="46" height="2.8" fill="#222229"/><rect x="382" y="38.4" width="18" height="242.6" rx="4" fill="#0c0c11"/><path d="M349.6,28.9 L366.3,38 L349.6,47.1 Z" fill="url(#tg)" stroke="url(#tg)" stroke-width="2" stroke-linejoin="round"/><path d="M432.4,28.9 L415.7,38 L432.4,47.1 Z" fill="url(#tg)" stroke="url(#tg)" stroke-width="2" stroke-linejoin="round"/></svg>
<div class="t" style="top:94.61px;font-size:13.5px;line-height:13.5px;color:#ececec;letter-spacing:-0.581px;left:191.41px;transform:translateX(-50%);-webkit-text-stroke:0.3px #ececec;">FILTER</div>
<div class="t" style="top:94.61px;font-size:13.5px;line-height:13.5px;color:#ececec;letter-spacing:-0.317px;left:271.892px;transform:translateX(-50%);-webkit-text-stroke:0.3px #ececec;">HIGH</div>
<div class="t" style="top:192.71px;font-size:13.5px;line-height:13.5px;color:#ececec;letter-spacing:-0.453px;left:191.473px;transform:translateX(-50%);-webkit-text-stroke:0.3px #ececec;">SEND 1</div>
<div class="t" style="top:192.71px;font-size:13.5px;line-height:13.5px;color:#ececec;letter-spacing:0.127px;left:272.113px;transform:translateX(-50%);-webkit-text-stroke:0.3px #ececec;">MID</div>
<div class="t" style="top:292.81px;font-size:13.5px;line-height:13.5px;color:#ececec;letter-spacing:-0.453px;left:191.473px;transform:translateX(-50%);-webkit-text-stroke:0.3px #ececec;">SEND 2</div>
<div class="t" style="top:292.81px;font-size:13.5px;line-height:13.5px;color:#ececec;letter-spacing:-0.825px;left:271.637px;transform:translateX(-50%);-webkit-text-stroke:0.3px #ececec;">LOW</div>
<div class="t" style="top:292.91px;font-size:13.5px;line-height:13.5px;color:#ececec;letter-spacing:-0.256px;left:378.872px;transform:translateX(-50%);-webkit-text-stroke:0.3px #ececec;">VOL</div>
<div class="t" style="top:116.89px;font-size:20.5px;line-height:20.5px;color:#44444d;letter-spacing:-0.093px;left:596px;transform:translateX(-50%);">No active loop</div>
<div style="left:458px;top:244.5px;width:204px;height:59.5px;background:#1d1d24;border-radius:11px;"></div>
<div style="left:517.6px;top:244.5px;width:1.6px;height:59.5px;background:#121218;"></div>
<div style="left:599.8px;top:244.5px;width:1.6px;height:59.5px;background:#121218;"></div>
<svg style="left:0;top:0" width="742" height="326" viewBox="12 0 742 326"><path d="M506.7,262 L494.2,274 L506.7,286 Z" fill="#ececec"/><path d="M638,262 L650.5,274 L638,286 Z" fill="#ececec"/></svg>
<div class="t" style="top:262.36px;font-size:25px;line-height:25px;color:#ececec;font-weight:700;left:559.2px;transform:translateX(-50%);">4</div>
<div style="left:674px;top:244.5px;width:60.5px;height:59.5px;background:#1d1d24;border-radius:11px;"></div>
<svg style="left:687px;top:257.5px;" width="34" height="34" viewBox="0 0 24 24"><path d="M11.6 16.95 H9.1 A7.1 7.1 0 0 1 9.1 2.75 H14.9 A7.1 7.1 0 0 1 14.9 16.95 H14.5" fill="none" stroke="#ececec" stroke-width="2"/><path d="M9.4 13.9 L12.4 16.95 L9.4 20" fill="none" stroke="#ececec" stroke-width="2"/></svg>
</div>
<div style="left:12px;top:1281px;width:440px;height:9.5px;background:#17171d;"></div>
<div style="left:458px;top:1281px;width:296px;height:9.5px;background:#121218;"></div>
<div style="left:758px;top:91px;width:2254px;height:1200px;background:#0e0e14;"></div>
<div style="left:768.5px;top:101px;width:2234px;height:40px;background:#46464c;border:1.5px solid #e6e6e6;border-radius:5px;"></div>
<div style="left:767.8px;top:101px;width:2.5px;height:40px;background:#e2574c;"></div>
<div style="left:768.5px;top:151px;width:2234px;height:40px;background:#1d1d25;border:1.5px solid #33333b;"></div>
<div style="left:768.5px;top:151px;width:2px;height:12px;background:#50505a;"></div>
<div class="t" style="top:161.54px;font-size:21.8px;line-height:21.8px;color:#8b8b93;letter-spacing:0.2px;left:769px;">0:00</div>
<div style="left:1055px;top:151px;width:2px;height:12px;background:#9a9aa2;"></div>
<div class="t" style="top:161.54px;font-size:21.8px;line-height:21.8px;color:#8b8b93;letter-spacing:0.2px;left:1054.7px;">2:00</div>
<div style="left:1342.9px;top:151px;width:2px;height:12px;background:#9a9aa2;"></div>
<div class="t" style="top:161.54px;font-size:21.8px;line-height:21.8px;color:#8b8b93;letter-spacing:0.2px;left:1342.6px;">4:00</div>
<div style="left:1630.8px;top:151px;width:2px;height:12px;background:#9a9aa2;"></div>
<div class="t" style="top:161.54px;font-size:21.8px;line-height:21.8px;color:#8b8b93;letter-spacing:0.2px;left:1630.5px;">6:00</div>
<div style="left:1918.7px;top:151px;width:2px;height:12px;background:#9a9aa2;"></div>
<div class="t" style="top:161.54px;font-size:21.8px;line-height:21.8px;color:#8b8b93;letter-spacing:0.2px;left:1918.4px;">8:00</div>
<div style="left:2206.6px;top:151px;width:2px;height:12px;background:#9a9aa2;"></div>
<div class="t" style="top:161.54px;font-size:21.8px;line-height:21.8px;color:#8b8b93;letter-spacing:0.2px;left:2206.3px;">10:00</div>
<div style="left:2494.5px;top:151px;width:2px;height:12px;background:#9a9aa2;"></div>
<div class="t" style="top:161.54px;font-size:21.8px;line-height:21.8px;color:#8b8b93;letter-spacing:0.2px;left:2494.2px;">12:00</div>
<div style="left:2782.4px;top:151px;width:2px;height:12px;background:#9a9aa2;"></div>
<div class="t" style="top:161.54px;font-size:21.8px;line-height:21.8px;color:#8b8b93;letter-spacing:0.2px;left:2782.1px;">14:00</div>
<svg style="left:758px;top:195px" width="740" height="1090" viewBox="758 195 740 1090"><rect x="769" y="201.5" width="718" height="1079.5" fill="#121218"/><rect x="804.89" y="201.5" width="1.6" height="1079.5" fill="#202026"/><rect x="843.27" y="201.5" width="1.6" height="1079.5" fill="#202026"/><rect x="881.66" y="201.5" width="1.6" height="1079.5" fill="#202026"/><rect x="920.05" y="201.5" width="1.6" height="1079.5" fill="#202026"/><rect x="958.43" y="201.5" width="1.6" height="1079.5" fill="#202026"/><rect x="996.82" y="201.5" width="1.6" height="1079.5" fill="#202026"/><rect x="1035.21" y="201.5" width="1.6" height="1079.5" fill="#202026"/><rect x="1073.59" y="201.5" width="1.6" height="1079.5" fill="#202026"/><rect x="1111.98" y="201.5" width="1.6" height="1079.5" fill="#202026"/><rect x="1150.37" y="201.5" width="1.6" height="1079.5" fill="#202026"/><rect x="1188.75" y="201.5" width="1.6" height="1079.5" fill="#202026"/><rect x="1227.14" y="201.5" width="1.6" height="1079.5" fill="#202026"/><rect x="1265.53" y="201.5" width="1.6" height="1079.5" fill="#202026"/><rect x="1303.91" y="201.5" width="1.6" height="1079.5" fill="#202026"/><rect x="1342.30" y="201.5" width="1.6" height="1079.5" fill="#202026"/><rect x="1380.69" y="201.5" width="1.6" height="1079.5" fill="#202026"/><rect x="1419.07" y="201.5" width="1.6" height="1079.5" fill="#202026"/><rect x="1457.46" y="201.5" width="1.6" height="1079.5" fill="#202026"/><rect x="1485.4" y="201.5" width="1.6" height="1079.5" fill="#202026"/><rect x="769" y="201.5" width="718" height="1.6" fill="#1c1c22"/><rect x="769" y="529" width="718" height="4.4" fill="#1d1d23"/><rect x="769" y="859" width="718" height="4.4" fill="#1d1d23"/><rect x="769" y="1189" width="718" height="4.4" fill="#1d1d23"/><rect x="767.8" y="201.5" width="2.6" height="1079.5" fill="#e2574c"/></svg>
<div style="left:2618.5px;top:1153px;width:351px;height:96px;background:#15151b;border:1.5px solid #222229;border-radius:48px;"></div>
<svg style="left:2644px;top:1179px;" width="44" height="44" viewBox="0 0 24 24"><path fill="#ececec" d="M6 16h12V8H6v8zm2-6h8v4H8v-4zm-4 5H2v3c0 1.1.9 2 2 2h3v-2H4v-3zm0-9h3V4H4c-1.1 0-2 .9-2 2v3h2V6zm16-2h-3v2h3v3h2V6c0-1.1-.9-2-2-2zm0 14h-3v2h3c1.1 0 2-.9 2-2v-3h-2v3z"/></svg>
<svg style="left:2723px;top:1178px;" width="46" height="46" viewBox="0 0 24 24"><path fill="#ececec" d="M9 9V3H7v2.59L3.91 2.5 2.5 3.91 5.59 7H3v2h6zm12 0V7h-2.59l3.09-3.09-1.41-1.41L17 5.59V3h-2v6h6zM3 15v2h2.59L2.5 20.09l1.41 1.41L7 18.41V21h2v-6H3zm12 0v6h2v-2.59l3.09 3.09 1.41-1.41L18.41 17H21v-2h-6z"/></svg>
<svg style="left:2800px;top:1175px;" width="52" height="52" viewBox="2800 1175 52 52"><g fill="#4a8ff0"><path d="M2809.9 1191.4 V1203 A16.05 16.05 0 0 0 2842 1203 V1191.4 H2834.7 V1203 A8.75 8.75 0 0 1 2817.2 1203 V1191.4 Z"/>
<rect x="2809.9" y="1184.2" width="7.3" height="4.8"/><rect x="2834.7" y="1184.2" width="7.3" height="4.8"/>
<path d="M2827.7 1183.2 L2821 1195.6 L2824 1195.9 L2824.3 1206 L2831 1193.3 L2828 1193.1 Z"/></g></svg>
<svg style="left:2880px;top:1175px;" width="52" height="52" viewBox="2880 1175 52 52"><circle cx="2905.9" cy="1200.9" r="15.45" fill="none" stroke="#ececec" stroke-width="5.1"/>
<g stroke="#ececec" stroke-width="4" stroke-linecap="round"><path d="M2905.9 1185 V1192"/><path d="M2905.9 1216.8 V1209.8"/><path d="M2890 1200.9 H2897"/><path d="M2921.8 1200.9 H2914.8"/></g></svg>
<div style="left:12px;top:1297px;width:3000px;height:516px;background:#17171d;"></div>
<div class="t" style="top:1324.67px;font-size:27.5px;line-height:27.5px;color:#4a90e8;font-weight:700;letter-spacing:0.601px;left:45.3px;">File Explorer</div>
<div class="t" style="top:1324.69px;font-size:27.3px;line-height:27.3px;color:#b6b6be;letter-spacing:0.325px;left:293px;-webkit-text-stroke:0.35px #b6b6be;">Effects</div>
<div class="t" style="top:1324.69px;font-size:27.3px;line-height:27.3px;color:#b6b6be;letter-spacing:1.107px;left:450.5px;-webkit-text-stroke:0.35px #b6b6be;">Clip Editor</div>
<div class="t" style="top:1324.69px;font-size:27.3px;line-height:27.3px;color:#b6b6be;letter-spacing:1.18px;left:694.5px;-webkit-text-stroke:0.35px #b6b6be;">Mix Recommendations</div>
<div style="left:36px;top:1377px;width:2952px;height:411.5px;background:#0c0c0e;border-radius:13px;"></div>
<div style="left:44px;top:1385.3px;width:552px;height:63.5px;background:#17171c;border-radius:9px;"></div>
<svg style="left:55px;top:1399px;" width="38" height="38" viewBox="0 0 24 24"><path fill="#ececec" d="M15.5 14h-.79l-.28-.27C15.41 12.59 16 11.11 16 9.5 16 5.91 13.09 3 9.5 3S3 5.91 3 9.5 5.91 16 9.5 16c1.61 0 3.09-.59 4.23-1.57l.27.28v.79l5 4.99L20.49 19l-4.99-5zm-6 0C7.01 14 5 11.99 5 9.5S7.01 5 9.5 5 14 7.01 14 9.5 11.99 14 9.5 14z"/></svg>
<div class="t" style="top:1403.56px;font-size:25px;line-height:25px;color:#85858d;letter-spacing:-0.405px;left:115.5px;-webkit-text-stroke:0.3px #85858d;">Search...</div>
<div style="left:76px;top:1516.6px;width:520px;height:52.5px;background:#283d5f;"></div>
<svg style="left:52px;top:1483.1px;" width="17" height="17" viewBox="0 0 17 17"><path d="M0.3,0.5 L15.8,8.3 L0.3,16.1 Z" fill="#b4b4b4"/></svg>
<div class="t" style="top:1479.39px;font-size:26.5px;line-height:26.5px;color:#f0f0f0;letter-spacing:0.002px;left:128px;-webkit-text-stroke:0.35px #f0f0f0;">Playlists</div>
<div class="t" style="top:1530.99px;font-size:26.5px;line-height:26.5px;color:#f0f0f0;letter-spacing:0.582px;left:128px;-webkit-text-stroke:0.35px #f0f0f0;">Collection</div>
<svg style="left:52px;top:1586.7px;" width="17" height="17" viewBox="0 0 17 17"><path d="M0.3,0.5 L15.8,8.3 L0.3,16.1 Z" fill="#b4b4b4"/></svg>
<div class="t" style="top:1582.99px;font-size:26.5px;line-height:26.5px;color:#f0f0f0;letter-spacing:0.2px;left:128px;-webkit-text-stroke:0.35px #f0f0f0;">Music</div>
<svg style="left:52px;top:1638.7px;" width="17" height="17" viewBox="0 0 17 17"><path d="M0.3,0.5 L15.8,8.3 L0.3,16.1 Z" fill="#b4b4b4"/></svg>
<div class="t" style="top:1634.99px;font-size:26.5px;line-height:26.5px;color:#f0f0f0;letter-spacing:0.497px;left:128px;-webkit-text-stroke:0.35px #f0f0f0;">Documents</div>
<svg style="left:52px;top:1690.7px;" width="17" height="17" viewBox="0 0 17 17"><path d="M0.3,0.5 L15.8,8.3 L0.3,16.1 Z" fill="#b4b4b4"/></svg>
<div class="t" style="top:1686.99px;font-size:26.5px;line-height:26.5px;color:#f0f0f0;letter-spacing:-0.057px;left:128px;-webkit-text-stroke:0.35px #f0f0f0;">Drives</div>
<svg style="left:81.2px;top:1469.6px;" width="39.6" height="39.6" viewBox="0 0 24 24"><path fill="#4a8ff0" d="M15 6H3v2h12V6zm0 4H3v2h12v-2zM3 16h8v-2H3v2zM17 6v8.18c-.31-.11-.65-.18-1-.18-1.66 0-3 1.34-3 3s1.34 3 3 3 3-1.34 3-3V8h3V6h-5z"/></svg>
<svg style="left:80px;top:1520px;" width="44" height="44" viewBox="80 1520 44 44"><g fill="#4a8ff0"><rect x="94.2" y="1529" width="15.6" height="2.2" rx="1"/><rect x="90" y="1533" width="24.2" height="2.5" rx="1.1"/>
<rect x="86.1" y="1537.2" width="32.2" height="19.9" rx="3.2"/></g></svg>
<svg style="left:83px;top:1576.3px;" width="38" height="38" viewBox="0 0 24 24"><path fill="#4a8ff0" d="M10 4H4c-1.1 0-1.99.9-1.99 2L2 18c0 1.1.9 2 2 2h16c1.1 0 2-.9 2-2V8c0-1.1-.9-2-2-2h-8l-2-2z"/></svg>
<svg style="left:83px;top:1628.3px;" width="38" height="38" viewBox="0 0 24 24"><path fill="#4a8ff0" d="M10 4H4c-1.1 0-1.99.9-1.99 2L2 18c0 1.1.9 2 2 2h16c1.1 0 2-.9 2-2V8c0-1.1-.9-2-2-2h-8l-2-2z"/></svg>
<svg style="left:80px;top:1680px;" width="44" height="36" viewBox="80 1680 44 36"><g fill="#4a8ff0"><path d="M95.2 1688 H109.4 A2 2 0 0 1 111.2 1689.1 L117.4 1696.4 H87 L93.4 1689.1 A2 2 0 0 1 95.2 1688 Z"/><path d="M86.1 1698.1 H118.3 V1706.8 A3.2 3.2 0 0 1 115.1 1710 H89.3 A3.2 3.2 0 0 1 86.1 1706.8 Z"/></g>
<g fill="#0c0c0e"><circle cx="107.4" cy="1704.2" r="1.5"/><circle cx="112.3" cy="1704.2" r="1.5"/></g></svg>
<div style="left:610px;top:1385px;width:2369.5px;height:396px;background:#15151b;border-radius:9px 9px 0 0;overflow:hidden;">
<div style="left:0px;top:0px;width:2369.5px;height:48px;background:#24242c;"></div>
<div style="left:97.2px;top:0px;width:2px;height:48px;background:#1a1a21;"></div>
<div style="left:177.7px;top:0px;width:2px;height:48px;background:#1a1a21;"></div>
<div style="left:377.8px;top:0px;width:2px;height:48px;background:#1a1a21;"></div>
<div style="left:978px;top:0px;width:2px;height:48px;background:#1a1a21;"></div>
<div style="left:1177.4px;top:0px;width:2px;height:48px;background:#1a1a21;"></div>
<div style="left:1277.5px;top:0px;width:2px;height:48px;background:#1a1a21;"></div>
<div style="left:1381.8px;top:0px;width:2px;height:48px;background:#1a1a21;"></div>
<div style="left:1491.3px;top:0px;width:2px;height:48px;background:#1a1a21;"></div>
<div style="left:1672px;top:0px;width:2px;height:48px;background:#1a1a21;"></div>
<div style="left:1771.5px;top:0px;width:2px;height:48px;background:#1a1a21;"></div>
<div style="left:1972.2px;top:0px;width:2px;height:48px;background:#1a1a21;"></div>
<div style="left:2171.3px;top:0px;width:2px;height:48px;background:#1a1a21;"></div>
<div style="left:2271.9px;top:0px;width:2px;height:48px;background:#1a1a21;"></div>
<div class="t" style="top:15.74px;font-size:21.8px;line-height:21.8px;color:#6b6b75;font-weight:700;left:108px;transform-origin:0 0;transform:scaleX(1.02);">CO...</div>
<div class="t" style="top:15.74px;font-size:21.8px;line-height:21.8px;color:#6b6b75;font-weight:700;left:188.6px;transform-origin:0 0;transform:scaleX(0.925);">PREVIEW</div>
<div class="t" style="top:15.74px;font-size:21.8px;line-height:21.8px;color:#6b6b75;font-weight:700;left:388.2px;transform-origin:0 0;transform:scaleX(1.01);">TITLE</div>
<div class="t" style="top:15.74px;font-size:21.8px;line-height:21.8px;color:#6b6b75;font-weight:700;left:988.6px;transform-origin:0 0;transform:scaleX(0.983);">ARTIST</div>
<div class="t" style="top:15.74px;font-size:21.8px;line-height:21.8px;color:#6b6b75;font-weight:700;left:1188.9px;transform-origin:0 0;transform:scaleX(0.893);">BPM</div>
<div class="t" style="top:15.74px;font-size:21.8px;line-height:21.8px;color:#6b6b75;font-weight:700;left:1288.7px;transform-origin:0 0;transform:scaleX(0.897);">KEY</div>
<div class="t" style="top:15.74px;font-size:21.8px;line-height:21.8px;color:#6b6b75;font-weight:700;left:1393px;transform-origin:0 0;transform:scaleX(0.916);">ENERGY</div>
<div class="t" style="top:15.74px;font-size:21.8px;line-height:21.8px;color:#6b6b75;font-weight:700;left:1502.6px;transform-origin:0 0;transform:scaleX(0.98);">RATING</div>
<div class="t" style="top:15.74px;font-size:21.8px;line-height:21.8px;color:#6b6b75;font-weight:700;left:1682.3px;transform-origin:0 0;transform:scaleX(0.932);">STEMS</div>
<div class="t" style="top:15.74px;font-size:21.8px;line-height:21.8px;color:#6b6b75;font-weight:700;left:1782.1px;transform-origin:0 0;transform:scaleX(0.922);">GENRE</div>
<div class="t" style="top:15.74px;font-size:21.8px;line-height:21.8px;color:#6b6b75;font-weight:700;left:1982.3px;transform-origin:0 0;transform:scaleX(0.925);">YEAR</div>
<div class="t" style="top:15.74px;font-size:21.8px;line-height:21.8px;color:#6b6b75;font-weight:700;left:2181.9px;transform-origin:0 0;transform:scaleX(1.006);">TIME</div>
<div class="t" style="top:15.74px;font-size:21.8px;line-height:21.8px;color:#6b6b75;font-weight:700;left:2282.6px;transform-origin:0 0;transform:scaleX(1.02);">DATE ADDED</div>
<div style="left:0px;top:48px;width:2354px;height:80px;background:#121218;"></div>
<svg style="left:108px;top:56px;" width="64" height="64" viewBox="0 0 64 64"><rect width="64" height="64" fill="#f7f5f5"/><g filter="url(#cbl)"><path d="M10 22 L20 10 L34 9 L32 30 L20 40 L10 36 Z" fill="#dfa24a"/><path d="M9 30 L22 26 L30 40 L24 54 L13 48 Z" fill="#c8452f"/><path d="M20 12 L30 9 L28 22 L18 26 Z" fill="#e8c070"/><path d="M32 9 L48 13 L56 26 L54 40 L36 30 L30 20 Z" fill="#5d444c"/><path d="M30 20 L44 24 L50 34 L36 40 L28 32 Z" fill="#8d6f86"/><path d="M22 38 L34 30 L56 38 L54 54 L34 58 L24 52 Z" fill="#a8433a"/><path d="M40 16 L52 22 L54 30 L44 26 Z" fill="#9a8c8c"/><g stroke="#f6e9e6" stroke-width="2.3" fill="none"><path d="M27 50 L40 36 L47 41"/><path d="M33 54 L45 41 L52 46"/><path d="M40 57 L50 46 L56 50"/></g><g stroke="#4c2b33" stroke-width="1.6" fill="none"><path d="M30 52.5 L42.5 38.5"/><path d="M36.5 56 L47.5 43.5"/></g></g><rect x="6" y="58" width="7" height="1.6" fill="#c9d3e0"/><rect x="52" y="58" width="5" height="1.6" fill="#ddd"/><rect x="6" y="4.5" width="50" height="1" fill="#e6dede"/></svg>
<svg style="left:187px;top:57.7px;" width="186" height="61" viewBox="0 0 186 61"><g filter="url(#wbl)"><rect x="0.75" y="0.7" width="2.6" height="59.3" rx="1.3" fill="url(#wr)"/><rect x="5.34" y="0.8" width="2.6" height="59.0" rx="1.3" fill="url(#wr)"/><rect x="9.93" y="0.4" width="2.6" height="59.9" rx="1.3" fill="url(#wy)"/><rect x="14.52" y="0.9" width="2.6" height="58.8" rx="1.3" fill="url(#wo)"/><rect x="19.11" y="0.5" width="2.6" height="59.7" rx="1.3" fill="url(#wr)"/><rect x="23.70" y="0.6" width="2.6" height="59.3" rx="1.3" fill="url(#wy)"/><rect x="28.29" y="0.9" width="2.6" height="58.8" rx="1.3" fill="url(#wo)"/><rect x="32.88" y="0.5" width="2.6" height="59.6" rx="1.3" fill="url(#wo)"/><rect x="37.47" y="0.9" width="2.6" height="58.8" rx="1.3" fill="url(#wy)"/><rect x="42.06" y="0.6" width="2.6" height="59.5" rx="1.3" fill="url(#wy)"/><rect x="46.65" y="3.8" width="2.6" height="52.9" rx="1.3" fill="url(#wt)"/><rect x="51.24" y="3.8" width="2.6" height="53.0" rx="1.3" fill="url(#wt)"/><rect x="55.83" y="0.6" width="2.6" height="59.5" rx="1.3" fill="url(#wt)"/><rect x="60.42" y="0.2" width="2.6" height="60.2" rx="1.3" fill="url(#wt)"/><rect x="65.01" y="0.8" width="2.6" height="58.9" rx="1.3" fill="url(#wt)"/><rect x="69.60" y="0.8" width="2.6" height="59.1" rx="1.3" fill="url(#wt)"/><rect x="74.19" y="0.4" width="2.6" height="59.8" rx="1.3" fill="url(#wo)"/><rect x="78.78" y="0.1" width="2.6" height="60.4" rx="1.3" fill="url(#wo)"/><rect x="83.37" y="0.4" width="2.6" height="59.7" rx="1.3" fill="url(#wo)"/><rect x="87.96" y="0.6" width="2.6" height="59.4" rx="1.3" fill="url(#wo)"/><rect x="92.55" y="0.1" width="2.6" height="60.5" rx="1.3" fill="url(#wy)"/><rect x="97.14" y="5.3" width="2.6" height="50.0" rx="1.3" fill="url(#wt)"/><rect x="101.73" y="4.7" width="2.6" height="51.2" rx="1.3" fill="url(#wt)"/><rect x="106.32" y="4.2" width="2.6" height="52.1" rx="1.3" fill="url(#wg)"/><rect x="110.91" y="0.8" width="2.6" height="58.9" rx="1.3" fill="url(#wg)"/><rect x="115.50" y="0.9" width="2.6" height="58.9" rx="1.3" fill="url(#wg)"/><rect x="120.09" y="0.7" width="2.6" height="59.2" rx="1.3" fill="url(#wg)"/><rect x="124.68" y="0.2" width="2.6" height="60.2" rx="1.3" fill="url(#wg)"/><rect x="129.27" y="0.8" width="2.6" height="59.0" rx="1.3" fill="url(#wo)"/><rect x="133.86" y="0.4" width="2.6" height="59.7" rx="1.3" fill="url(#wo)"/><rect x="138.45" y="0.4" width="2.6" height="59.8" rx="1.3" fill="url(#wy)"/><rect x="143.04" y="0.6" width="2.6" height="59.4" rx="1.3" fill="url(#wo)"/><rect x="147.63" y="0.5" width="2.6" height="59.7" rx="1.3" fill="url(#wo)"/><rect x="152.22" y="0.9" width="2.6" height="58.8" rx="1.3" fill="url(#wy)"/><rect x="156.81" y="0.9" width="2.6" height="58.8" rx="1.3" fill="url(#wr)"/><rect x="161.40" y="0.8" width="2.6" height="59.1" rx="1.3" fill="url(#wr)"/><rect x="165.99" y="0.3" width="2.6" height="59.9" rx="1.3" fill="url(#wr)"/><rect x="170.58" y="0.6" width="2.6" height="59.5" rx="1.3" fill="url(#wr)"/><rect x="175.17" y="0.7" width="2.6" height="59.3" rx="1.3" fill="url(#wr)"/><rect x="179.76" y="0.4" width="2.6" height="59.7" rx="1.3" fill="url(#wy)"/></g></svg>
<div class="t" style="top:77.18px;font-size:24px;line-height:24px;color:#ececec;letter-spacing:0.472px;left:392px;-webkit-text-stroke:0.4px #ececec;">Latin Lovers (Joyhauser Remix)</div>
<div class="t" style="top:77.18px;font-size:24px;line-height:24px;color:#ececec;letter-spacing:0.834px;left:992px;-webkit-text-stroke:0.4px #ececec;">Monika Kruse</div>
<div class="t" style="top:77.18px;font-size:24px;line-height:24px;color:#ececec;letter-spacing:1.435px;left:1193px;-webkit-text-stroke:0.4px #ececec;">140.0</div>
<div style="left:1288px;top:59.8px;width:89.7px;height:56.1px;background:#212d18;border-radius:13px;"></div>
<div class="t" style="top:78.02px;font-size:22px;line-height:22px;color:#96ee55;font-weight:700;letter-spacing:0.9px;left:1333px;transform:translateX(-50%);">6A</div>
<div style="left:1411.1px;top:60.3px;width:55.6px;height:55.6px;background:#2b1c22;border-radius:28px;"></div>
<div class="t" style="top:79.46px;font-size:18.2px;line-height:18.2px;color:#e66a80;font-weight:700;letter-spacing:1.1px;left:1439.5px;transform:translateX(-50%);">92</div>
<svg style="left:1501.5px;top:75.4px;" width="26.8" height="26.8" viewBox="0 0 24 24"><path fill="#5b5b66" d="M12 17.27L18.18 21l-1.64-7.03L22 9.24l-7.19-.61L12 2 9.19 8.63 2 9.24l5.46 4.73L5.82 21z"/></svg>
<svg style="left:1533.6px;top:75.4px;" width="26.8" height="26.8" viewBox="0 0 24 24"><path fill="#5b5b66" d="M12 17.27L18.18 21l-1.64-7.03L22 9.24l-7.19-.61L12 2 9.19 8.63 2 9.24l5.46 4.73L5.82 21z"/></svg>
<svg style="left:1565.7px;top:75.4px;" width="26.8" height="26.8" viewBox="0 0 24 24"><path fill="#5b5b66" d="M12 17.27L18.18 21l-1.64-7.03L22 9.24l-7.19-.61L12 2 9.19 8.63 2 9.24l5.46 4.73L5.82 21z"/></svg>
<svg style="left:1597.8px;top:75.4px;" width="26.8" height="26.8" viewBox="0 0 24 24"><path fill="#5b5b66" d="M12 17.27L18.18 21l-1.64-7.03L22 9.24l-7.19-.61L12 2 9.19 8.63 2 9.24l5.46 4.73L5.82 21z"/></svg>
<svg style="left:1629.9px;top:75.4px;" width="26.8" height="26.8" viewBox="0 0 24 24"><path fill="#5b5b66" d="M12 17.27L18.18 21l-1.64-7.03L22 9.24l-7.19-.61L12 2 9.19 8.63 2 9.24l5.46 4.73L5.82 21z"/></svg>
<div class="t" style="top:77.18px;font-size:24px;line-height:24px;color:#ececec;letter-spacing:0.496px;left:1786px;-webkit-text-stroke:0.4px #ececec;">Techno (Pea...</div>
<div class="t" style="top:77.18px;font-size:24px;line-height:24px;color:#ececec;letter-spacing:1.703px;left:1986px;-webkit-text-stroke:0.4px #ececec;">2024</div>
<div class="t" style="top:77.18px;font-size:24px;line-height:24px;color:#ececec;letter-spacing:1.463px;left:2186px;-webkit-text-stroke:0.4px #ececec;">6:25</div>
<div class="t" style="top:77.18px;font-size:24px;line-height:24px;color:#ececec;letter-spacing:2.356px;left:2286.5px;-webkit-text-stroke:0.4px #ececec;">20/11</div>
<div style="left:0px;top:128px;width:2354px;height:80px;background:#1a1a22;"></div>
<svg style="left:108px;top:136px;" width="64" height="64" viewBox="0 0 64 64"><rect width="64" height="64" fill="#060606"/><path d="M44 0 H64 V64 H20 Q30 50 40 44 Q54 30 44 0 Z" fill="url(#dots)"/><g filter="url(#cbl)"><path d="M0 30 Q10 24 20 30 Q28 36 24 46 Q30 52 22 58 L20 64 H0 Z" fill="#e9e9e9"/><path d="M4 32 Q12 28 22 34 L20 38 Q12 33 4 37 Z" fill="#0a0a0a"/><path d="M0 44 Q8 40 16 44 Q20 50 14 52 Q8 48 0 52 Z" fill="#111"/><path d="M2 57 Q10 54 18 58 L16 61 Q10 58 2 61 Z" fill="#111"/><rect x="3" y="4.5" width="27" height="3" fill="#e8e8e8"/><rect x="3" y="9.8" width="22" height="3" fill="#e0e0e0"/><rect x="3" y="15" width="26" height="3" fill="#d8d8d8"/><rect x="50" y="52" width="9" height="7" fill="#ddd"/></g></svg>
<svg style="left:187px;top:137.7px;" width="186" height="61" viewBox="0 0 186 61"><g filter="url(#wbl)"><rect x="0.75" y="10.8" width="2.6" height="39.0" rx="1.3" fill="url(#wc)"/><rect x="5.34" y="12.2" width="2.6" height="36.3" rx="1.3" fill="url(#wc)"/><rect x="9.93" y="11.4" width="2.6" height="37.7" rx="1.3" fill="url(#wc)"/><rect x="14.52" y="0.3" width="2.6" height="60.0" rx="1.3" fill="url(#wc)"/><rect x="19.11" y="0.9" width="2.6" height="58.8" rx="1.3" fill="url(#wl)"/><rect x="23.70" y="0.7" width="2.6" height="59.1" rx="1.3" fill="url(#wg)"/><rect x="28.29" y="0.1" width="2.6" height="60.5" rx="1.3" fill="url(#wg)"/><rect x="32.88" y="0.8" width="2.6" height="59.1" rx="1.3" fill="url(#wg)"/><rect x="37.47" y="0.4" width="2.6" height="59.8" rx="1.3" fill="url(#wo)"/><rect x="42.06" y="0.5" width="2.6" height="59.5" rx="1.3" fill="url(#wo)"/><rect x="46.65" y="0.5" width="2.6" height="59.5" rx="1.3" fill="url(#wo)"/><rect x="51.24" y="0.5" width="2.6" height="59.6" rx="1.3" fill="url(#wo)"/><rect x="55.83" y="0.8" width="2.6" height="59.0" rx="1.3" fill="url(#wo)"/><rect x="60.42" y="0.2" width="2.6" height="60.2" rx="1.3" fill="url(#wo)"/><rect x="65.01" y="0.9" width="2.6" height="58.8" rx="1.3" fill="url(#wo)"/><rect x="69.60" y="0.7" width="2.6" height="59.1" rx="1.3" fill="url(#wy)"/><rect x="74.19" y="0.9" width="2.6" height="58.7" rx="1.3" fill="url(#wo)"/><rect x="78.78" y="0.7" width="2.6" height="59.2" rx="1.3" fill="url(#wo)"/><rect x="83.37" y="0.6" width="2.6" height="59.4" rx="1.3" fill="url(#wr)"/><rect x="87.96" y="0.1" width="2.6" height="60.3" rx="1.3" fill="url(#wr)"/><rect x="92.55" y="0.6" width="2.6" height="59.4" rx="1.3" fill="url(#wl)"/><rect x="97.14" y="6.7" width="2.6" height="47.1" rx="1.3" fill="url(#wg)"/><rect x="101.73" y="6.6" width="2.6" height="47.3" rx="1.3" fill="url(#wg)"/><rect x="106.32" y="0.1" width="2.6" height="60.5" rx="1.3" fill="url(#wg)"/><rect x="110.91" y="0.9" width="2.6" height="58.8" rx="1.3" fill="url(#wo)"/><rect x="115.50" y="0.4" width="2.6" height="59.8" rx="1.3" fill="url(#wo)"/><rect x="120.09" y="0.6" width="2.6" height="59.4" rx="1.3" fill="url(#wo)"/><rect x="124.68" y="0.4" width="2.6" height="59.9" rx="1.3" fill="url(#wo)"/><rect x="129.27" y="0.7" width="2.6" height="59.3" rx="1.3" fill="url(#wr)"/><rect x="133.86" y="0.3" width="2.6" height="59.9" rx="1.3" fill="url(#wr)"/><rect x="138.45" y="5.0" width="2.6" height="50.6" rx="1.3" fill="url(#wg)"/><rect x="143.04" y="0.4" width="2.6" height="59.9" rx="1.3" fill="url(#wg)"/><rect x="147.63" y="0.1" width="2.6" height="60.3" rx="1.3" fill="url(#wo)"/><rect x="152.22" y="0.4" width="2.6" height="59.7" rx="1.3" fill="url(#wo)"/><rect x="156.81" y="0.8" width="2.6" height="58.9" rx="1.3" fill="url(#wo)"/><rect x="161.40" y="0.9" width="2.6" height="58.8" rx="1.3" fill="url(#wo)"/><rect x="165.99" y="0.1" width="2.6" height="60.4" rx="1.3" fill="url(#wo)"/><rect x="170.58" y="0.5" width="2.6" height="59.6" rx="1.3" fill="url(#wy)"/><rect x="175.17" y="0.8" width="2.6" height="59.0" rx="1.3" fill="url(#wy)"/><rect x="179.76" y="0.1" width="2.6" height="60.4" rx="1.3" fill="url(#wy)"/></g></svg>
<div class="t" style="top:157.18px;font-size:24px;line-height:24px;color:#ececec;letter-spacing:0.77px;left:392px;-webkit-text-stroke:0.4px #ececec;">Bring Me Up (Hotswing Extended Remix)</div>
<div class="t" style="top:157.18px;font-size:24px;line-height:24px;color:#ececec;letter-spacing:0.838px;left:992px;-webkit-text-stroke:0.4px #ececec;">Moreno Pezz...</div>
<div class="t" style="top:157.18px;font-size:24px;line-height:24px;color:#ececec;letter-spacing:1.435px;left:1193px;-webkit-text-stroke:0.4px #ececec;">128.0</div>
<div style="left:1288px;top:139.8px;width:89.7px;height:56.1px;background:#202340;border-radius:13px;"></div>
<div class="t" style="top:158.01px;font-size:22px;line-height:22px;color:#5f6ef5;font-weight:700;letter-spacing:0.9px;left:1333px;transform:translateX(-50%);">11A</div>
<div style="left:1411.1px;top:140.3px;width:55.6px;height:55.6px;background:#2d1e25;border-radius:28px;"></div>
<div class="t" style="top:159.46px;font-size:18.2px;line-height:18.2px;color:#e66a80;font-weight:700;letter-spacing:1.1px;left:1439.5px;transform:translateX(-50%);">93</div>
<svg style="left:1501.5px;top:155.4px;" width="26.8" height="26.8" viewBox="0 0 24 24"><path fill="#5b5b66" d="M12 17.27L18.18 21l-1.64-7.03L22 9.24l-7.19-.61L12 2 9.19 8.63 2 9.24l5.46 4.73L5.82 21z"/></svg>
<svg style="left:1533.6px;top:155.4px;" width="26.8" height="26.8" viewBox="0 0 24 24"><path fill="#5b5b66" d="M12 17.27L18.18 21l-1.64-7.03L22 9.24l-7.19-.61L12 2 9.19 8.63 2 9.24l5.46 4.73L5.82 21z"/></svg>
<svg style="left:1565.7px;top:155.4px;" width="26.8" height="26.8" viewBox="0 0 24 24"><path fill="#5b5b66" d="M12 17.27L18.18 21l-1.64-7.03L22 9.24l-7.19-.61L12 2 9.19 8.63 2 9.24l5.46 4.73L5.82 21z"/></svg>
<svg style="left:1597.8px;top:155.4px;" width="26.8" height="26.8" viewBox="0 0 24 24"><path fill="#5b5b66" d="M12 17.27L18.18 21l-1.64-7.03L22 9.24l-7.19-.61L12 2 9.19 8.63 2 9.24l5.46 4.73L5.82 21z"/></svg>
<svg style="left:1629.9px;top:155.4px;" width="26.8" height="26.8" viewBox="0 0 24 24"><path fill="#5b5b66" d="M12 17.27L18.18 21l-1.64-7.03L22 9.24l-7.19-.61L12 2 9.19 8.63 2 9.24l5.46 4.73L5.82 21z"/></svg>
<div class="t" style="top:157.18px;font-size:24px;line-height:24px;color:#ececec;letter-spacing:0.212px;left:1786px;-webkit-text-stroke:0.4px #ececec;">Jackin House</div>
<div class="t" style="top:157.18px;font-size:24px;line-height:24px;color:#ececec;letter-spacing:1.703px;left:1986px;-webkit-text-stroke:0.4px #ececec;">2022</div>
<div class="t" style="top:157.18px;font-size:24px;line-height:24px;color:#ececec;letter-spacing:1.463px;left:2186px;-webkit-text-stroke:0.4px #ececec;">5:00</div>
<div class="t" style="top:157.18px;font-size:24px;line-height:24px;color:#ececec;letter-spacing:2.356px;left:2286.5px;-webkit-text-stroke:0.4px #ececec;">20/11</div>
<div style="left:0px;top:208px;width:2354px;height:80px;background:#121218;"></div>
<svg style="left:108px;top:216px;" width="64" height="64" viewBox="0 0 64 64"><rect width="64" height="64" fill="#d9d9db"/><g filter="url(#cbl2)"><rect x="0" y="0" width="10" height="64" fill="#b4b4b8"/><rect x="54" y="0" width="10" height="64" fill="#a6a6aa"/><ellipse cx="31" cy="6" rx="24" ry="8" fill="#e8e8ea"/><path d="M0 64 V44 Q14 36 24 44 L40 44 Q54 38 64 48 V64 Z" fill="#5e5e62"/><ellipse cx="30" cy="28" rx="13" ry="16" fill="#e2dedc"/><path d="M15 22 Q16 4 32 4 Q46 6 44 22 Q40 12 30 13 Q20 12 17 26 Z" fill="#38b3ae"/><path d="M22 26 h6 M33 26 h6" stroke="#333" stroke-width="2"/><path d="M25 38 q5 3 10 0" stroke="#444" stroke-width="1.5" fill="none"/><path d="M26 42 L30 56 L36 42 Z" fill="#e4e4e4"/></g><g filter="url(#cbl)" stroke="#3fd6cd" stroke-width="3.2" fill="none" stroke-linecap="round"><path d="M8 57 Q16 44 24 52 T38 46 Q46 40 50 48 T62 38"/><path d="M22 50 Q30 42 34 50 Q40 56 46 46"/></g></svg>
<svg style="left:187px;top:217.7px;" width="186" height="61" viewBox="0 0 186 61"><g filter="url(#wbl)"><rect x="0.75" y="0.5" width="2.6" height="59.5" rx="1.3" fill="url(#wg)"/><rect x="5.34" y="0.6" width="2.6" height="59.4" rx="1.3" fill="url(#wy)"/><rect x="9.93" y="0.8" width="2.6" height="58.9" rx="1.3" fill="url(#wo)"/><rect x="14.52" y="0.2" width="2.6" height="60.3" rx="1.3" fill="url(#wr)"/><rect x="19.11" y="1.0" width="2.6" height="58.7" rx="1.3" fill="url(#wr)"/><rect x="23.70" y="0.5" width="2.6" height="59.6" rx="1.3" fill="url(#wr)"/><rect x="28.29" y="0.1" width="2.6" height="60.3" rx="1.3" fill="url(#wo)"/><rect x="32.88" y="0.9" width="2.6" height="58.8" rx="1.3" fill="url(#wo)"/><rect x="37.47" y="0.5" width="2.6" height="59.7" rx="1.3" fill="url(#wr)"/><rect x="42.06" y="0.4" width="2.6" height="59.8" rx="1.3" fill="url(#wy)"/><rect x="46.65" y="0.9" width="2.6" height="58.8" rx="1.3" fill="url(#wg)"/><rect x="51.24" y="0.6" width="2.6" height="59.4" rx="1.3" fill="url(#wr)"/><rect x="55.83" y="0.3" width="2.6" height="60.0" rx="1.3" fill="url(#wy)"/><rect x="60.42" y="0.5" width="2.6" height="59.5" rx="1.3" fill="url(#wl)"/><rect x="65.01" y="0.3" width="2.6" height="60.0" rx="1.3" fill="url(#wr)"/><rect x="69.60" y="0.8" width="2.6" height="59.0" rx="1.3" fill="url(#wo)"/><rect x="74.19" y="0.7" width="2.6" height="59.1" rx="1.3" fill="url(#wg)"/><rect x="78.78" y="0.9" width="2.6" height="58.9" rx="1.3" fill="url(#wo)"/><rect x="83.37" y="0.5" width="2.6" height="59.6" rx="1.3" fill="url(#wr)"/><rect x="87.96" y="0.1" width="2.6" height="60.4" rx="1.3" fill="url(#wr)"/><rect x="92.55" y="0.4" width="2.6" height="59.8" rx="1.3" fill="url(#wg)"/><rect x="97.14" y="0.3" width="2.6" height="60.1" rx="1.3" fill="url(#wl)"/><rect x="101.73" y="0.6" width="2.6" height="59.4" rx="1.3" fill="url(#wy)"/><rect x="106.32" y="0.3" width="2.6" height="60.0" rx="1.3" fill="url(#wg)"/><rect x="110.91" y="0.9" width="2.6" height="58.9" rx="1.3" fill="url(#wl)"/><rect x="115.50" y="0.7" width="2.6" height="59.2" rx="1.3" fill="url(#wy)"/><rect x="120.09" y="0.3" width="2.6" height="59.9" rx="1.3" fill="url(#wo)"/><rect x="124.68" y="0.3" width="2.6" height="60.0" rx="1.3" fill="url(#wr)"/><rect x="129.27" y="0.6" width="2.6" height="59.5" rx="1.3" fill="url(#wr)"/><rect x="133.86" y="0.9" width="2.6" height="58.8" rx="1.3" fill="url(#wr)"/><rect x="138.45" y="0.7" width="2.6" height="59.2" rx="1.3" fill="url(#wo)"/><rect x="143.04" y="0.8" width="2.6" height="59.1" rx="1.3" fill="url(#wr)"/><rect x="147.63" y="0.7" width="2.6" height="59.2" rx="1.3" fill="url(#wr)"/><rect x="152.22" y="0.2" width="2.6" height="60.2" rx="1.3" fill="url(#wo)"/><rect x="156.81" y="0.8" width="2.6" height="59.0" rx="1.3" fill="url(#wr)"/><rect x="161.40" y="0.2" width="2.6" height="60.3" rx="1.3" fill="url(#wr)"/><rect x="165.99" y="0.2" width="2.6" height="60.3" rx="1.3" fill="url(#wr)"/><rect x="170.58" y="0.9" width="2.6" height="58.8" rx="1.3" fill="url(#wo)"/><rect x="175.17" y="0.6" width="2.6" height="59.4" rx="1.3" fill="url(#wg)"/><rect x="179.76" y="0.5" width="2.6" height="59.6" rx="1.3" fill="url(#wg)"/></g></svg>
<div class="t" style="top:237.18px;font-size:24px;line-height:24px;color:#ececec;letter-spacing:0.755px;left:392px;-webkit-text-stroke:0.4px #ececec;">Better For My Brain (Original Mix)</div>
<div class="t" style="top:237.18px;font-size:24px;line-height:24px;color:#ececec;letter-spacing:0.092px;left:992px;-webkit-text-stroke:0.4px #ececec;">Pele, Shawnecy</div>
<div class="t" style="top:237.18px;font-size:24px;line-height:24px;color:#ececec;letter-spacing:1.435px;left:1193px;-webkit-text-stroke:0.4px #ececec;">124.0</div>
<div style="left:1288px;top:219.8px;width:89.7px;height:56.1px;background:#18282f;border-radius:13px;"></div>
<div class="t" style="top:238.01px;font-size:22px;line-height:22px;color:#6feef5;font-weight:700;letter-spacing:0.9px;left:1333px;transform:translateX(-50%);">9A</div>
<div style="left:1411.1px;top:220.3px;width:55.6px;height:55.6px;background:#2b1c22;border-radius:28px;"></div>
<div class="t" style="top:239.46px;font-size:18.2px;line-height:18.2px;color:#e86a88;font-weight:700;letter-spacing:1.1px;left:1439.5px;transform:translateX(-50%);">89</div>
<svg style="left:1501.5px;top:235.4px;" width="26.8" height="26.8" viewBox="0 0 24 24"><path fill="#5b5b66" d="M12 17.27L18.18 21l-1.64-7.03L22 9.24l-7.19-.61L12 2 9.19 8.63 2 9.24l5.46 4.73L5.82 21z"/></svg>
<svg style="left:1533.6px;top:235.4px;" width="26.8" height="26.8" viewBox="0 0 24 24"><path fill="#5b5b66" d="M12 17.27L18.18 21l-1.64-7.03L22 9.24l-7.19-.61L12 2 9.19 8.63 2 9.24l5.46 4.73L5.82 21z"/></svg>
<svg style="left:1565.7px;top:235.4px;" width="26.8" height="26.8" viewBox="0 0 24 24"><path fill="#5b5b66" d="M12 17.27L18.18 21l-1.64-7.03L22 9.24l-7.19-.61L12 2 9.19 8.63 2 9.24l5.46 4.73L5.82 21z"/></svg>
<svg style="left:1597.8px;top:235.4px;" width="26.8" height="26.8" viewBox="0 0 24 24"><path fill="#5b5b66" d="M12 17.27L18.18 21l-1.64-7.03L22 9.24l-7.19-.61L12 2 9.19 8.63 2 9.24l5.46 4.73L5.82 21z"/></svg>
<svg style="left:1629.9px;top:235.4px;" width="26.8" height="26.8" viewBox="0 0 24 24"><path fill="#5b5b66" d="M12 17.27L18.18 21l-1.64-7.03L22 9.24l-7.19-.61L12 2 9.19 8.63 2 9.24l5.46 4.73L5.82 21z"/></svg>
<div class="t" style="top:237.18px;font-size:24px;line-height:24px;color:#ececec;letter-spacing:0.785px;left:1786px;-webkit-text-stroke:0.4px #ececec;">Tech House</div>
<div class="t" style="top:237.18px;font-size:24px;line-height:24px;color:#ececec;letter-spacing:1.703px;left:1986px;-webkit-text-stroke:0.4px #ececec;">2015</div>
<div class="t" style="top:237.18px;font-size:24px;line-height:24px;color:#ececec;letter-spacing:1.463px;left:2186px;-webkit-text-stroke:0.4px #ececec;">6:38</div>
<div class="t" style="top:237.18px;font-size:24px;line-height:24px;color:#ececec;letter-spacing:2.356px;left:2286.5px;-webkit-text-stroke:0.4px #ececec;">20/11</div>
<div style="left:0px;top:288px;width:2354px;height:80px;background:#1a1a22;"></div>
<svg style="left:108px;top:296px;" width="64" height="64" viewBox="0 0 64 64"><rect width="64" height="64" fill="#050505"/><g filter="url(#cbl)"><rect x="6" y="6" width="52" height="38" fill="url(#chk)"/><path d="M6 6 H40 L8 40 H6 Z" fill="#e04f8e"/><path d="M18 6 H46 L14 42 H6 V36 Z" fill="#37b99f" opacity="0.92"/><path d="M6 10 V44 H12 L8 30 Z" fill="#9fd04a"/><path d="M6 6 H30 L6 30 Z" fill="#e04f8e" opacity="0.85"/><path d="M16 44 L22 38 H58 V44 Z" fill="#0b0b0b" opacity="0.55"/><rect x="7" y="47" width="50" height="10.5" rx="1" fill="#e9e9e9"/><rect x="9" y="49.2" width="34" height="1.6" fill="#999"/><rect x="9" y="52.6" width="26" height="1.4" fill="#b5b5b5"/><rect x="47" y="47" width="10" height="10.5" fill="#cfcfcf"/><path d="M54.5 50 H50.5 V55 H54.5" stroke="#111" stroke-width="1.6" fill="none"/></g></svg>
<svg style="left:187px;top:297.7px;" width="186" height="61" viewBox="0 0 186 61"><g filter="url(#wbl)"><rect x="0.75" y="12.4" width="2.6" height="35.8" rx="1.3" fill="url(#wg)"/><rect x="5.34" y="12.5" width="2.6" height="35.7" rx="1.3" fill="url(#wg)"/><rect x="9.93" y="12.4" width="2.6" height="35.8" rx="1.3" fill="url(#wg)"/><rect x="14.52" y="12.6" width="2.6" height="35.4" rx="1.3" fill="url(#wg)"/><rect x="19.11" y="12.9" width="2.6" height="34.9" rx="1.3" fill="url(#wg)"/><rect x="23.70" y="0.2" width="2.6" height="60.2" rx="1.3" fill="url(#wy)"/><rect x="28.29" y="0.4" width="2.6" height="59.9" rx="1.3" fill="url(#wo)"/><rect x="32.88" y="0.8" width="2.6" height="59.0" rx="1.3" fill="url(#wo)"/><rect x="37.47" y="0.5" width="2.6" height="59.6" rx="1.3" fill="url(#wy)"/><rect x="42.06" y="0.7" width="2.6" height="59.3" rx="1.3" fill="url(#wy)"/><rect x="46.65" y="3.1" width="2.6" height="54.4" rx="1.3" fill="url(#wy)"/><rect x="51.24" y="0.1" width="2.6" height="60.4" rx="1.3" fill="url(#wy)"/><rect x="55.83" y="0.1" width="2.6" height="60.5" rx="1.3" fill="url(#wl)"/><rect x="60.42" y="0.9" width="2.6" height="58.8" rx="1.3" fill="url(#wo)"/><rect x="65.01" y="0.2" width="2.6" height="60.2" rx="1.3" fill="url(#wo)"/><rect x="69.60" y="0.4" width="2.6" height="59.8" rx="1.3" fill="url(#wy)"/><rect x="74.19" y="0.6" width="2.6" height="59.4" rx="1.3" fill="url(#wy)"/><rect x="78.78" y="0.7" width="2.6" height="59.2" rx="1.3" fill="url(#wo)"/><rect x="83.37" y="0.3" width="2.6" height="59.9" rx="1.3" fill="url(#wo)"/><rect x="87.96" y="0.5" width="2.6" height="59.5" rx="1.3" fill="url(#wo)"/><rect x="92.55" y="0.3" width="2.6" height="59.9" rx="1.3" fill="url(#wy)"/><rect x="97.14" y="0.4" width="2.6" height="59.9" rx="1.3" fill="url(#wg)"/><rect x="101.73" y="0.8" width="2.6" height="58.9" rx="1.3" fill="url(#wg)"/><rect x="106.32" y="0.3" width="2.6" height="60.1" rx="1.3" fill="url(#wg)"/><rect x="110.91" y="0.1" width="2.6" height="60.5" rx="1.3" fill="url(#wl)"/><rect x="115.50" y="0.1" width="2.6" height="60.4" rx="1.3" fill="url(#wg)"/><rect x="120.09" y="0.4" width="2.6" height="59.8" rx="1.3" fill="url(#wy)"/><rect x="124.68" y="0.9" width="2.6" height="58.8" rx="1.3" fill="url(#wo)"/><rect x="129.27" y="1.0" width="2.6" height="58.7" rx="1.3" fill="url(#wo)"/><rect x="133.86" y="0.8" width="2.6" height="58.9" rx="1.3" fill="url(#wy)"/><rect x="138.45" y="0.1" width="2.6" height="60.4" rx="1.3" fill="url(#wy)"/><rect x="143.04" y="0.7" width="2.6" height="59.2" rx="1.3" fill="url(#wo)"/><rect x="147.63" y="0.6" width="2.6" height="59.3" rx="1.3" fill="url(#wo)"/><rect x="152.22" y="0.1" width="2.6" height="60.3" rx="1.3" fill="url(#wo)"/><rect x="156.81" y="0.7" width="2.6" height="59.3" rx="1.3" fill="url(#wo)"/><rect x="161.40" y="0.5" width="2.6" height="59.7" rx="1.3" fill="url(#wo)"/><rect x="165.99" y="0.6" width="2.6" height="59.5" rx="1.3" fill="url(#wy)"/><rect x="170.58" y="0.9" width="2.6" height="58.8" rx="1.3" fill="url(#wy)"/><rect x="175.17" y="8.8" width="2.6" height="43.0" rx="1.3" fill="url(#wg)"/><rect x="179.76" y="10.4" width="2.6" height="39.7" rx="1.3" fill="url(#wg)"/></g></svg>
<div class="t" style="top:317.18px;font-size:24px;line-height:24px;color:#ececec;letter-spacing:0.562px;left:392px;-webkit-text-stroke:0.4px #ececec;">It Feels So Good (Extended Mix)</div>
<div class="t" style="top:317.18px;font-size:24px;line-height:24px;color:#ececec;letter-spacing:0.777px;left:992px;-webkit-text-stroke:0.4px #ececec;">Sonique, Mat...</div>
<div class="t" style="top:317.18px;font-size:24px;line-height:24px;color:#ececec;letter-spacing:1.435px;left:1193px;-webkit-text-stroke:0.4px #ececec;">128.0</div>
<div style="left:1288px;top:299.8px;width:89.7px;height:56.1px;background:#2f2c20;border-radius:13px;"></div>
<div class="t" style="top:318.02px;font-size:22px;line-height:22px;color:#f5dc4a;font-weight:700;letter-spacing:0.9px;left:1333px;transform:translateX(-50%);">4A</div>
<div style="left:1411.1px;top:300.3px;width:55.6px;height:55.6px;background:#2f2a27;border-radius:28px;"></div>
<div class="t" style="top:319.46px;font-size:18.2px;line-height:18.2px;color:#e8b05a;font-weight:700;letter-spacing:1.1px;left:1439.5px;transform:translateX(-50%);">86</div>
<svg style="left:1501.5px;top:315.4px;" width="26.8" height="26.8" viewBox="0 0 24 24"><path fill="#5b5b66" d="M12 17.27L18.18 21l-1.64-7.03L22 9.24l-7.19-.61L12 2 9.19 8.63 2 9.24l5.46 4.73L5.82 21z"/></svg>
<svg style="left:1533.6px;top:315.4px;" width="26.8" height="26.8" viewBox="0 0 24 24"><path fill="#5b5b66" d="M12 17.27L18.18 21l-1.64-7.03L22 9.24l-7.19-.61L12 2 9.19 8.63 2 9.24l5.46 4.73L5.82 21z"/></svg>
<svg style="left:1565.7px;top:315.4px;" width="26.8" height="26.8" viewBox="0 0 24 24"><path fill="#5b5b66" d="M12 17.27L18.18 21l-1.64-7.03L22 9.24l-7.19-.61L12 2 9.19 8.63 2 9.24l5.46 4.73L5.82 21z"/></svg>
<svg style="left:1597.8px;top:315.4px;" width="26.8" height="26.8" viewBox="0 0 24 24"><path fill="#5b5b66" d="M12 17.27L18.18 21l-1.64-7.03L22 9.24l-7.19-.61L12 2 9.19 8.63 2 9.24l5.46 4.73L5.82 21z"/></svg>
<svg style="left:1629.9px;top:315.4px;" width="26.8" height="26.8" viewBox="0 0 24 24"><path fill="#5b5b66" d="M12 17.27L18.18 21l-1.64-7.03L22 9.24l-7.19-.61L12 2 9.19 8.63 2 9.24l5.46 4.73L5.82 21z"/></svg>
<div class="t" style="top:317.18px;font-size:24px;line-height:24px;color:#ececec;letter-spacing:0.785px;left:1786px;-webkit-text-stroke:0.4px #ececec;">Tech House</div>
<div class="t" style="top:317.18px;font-size:24px;line-height:24px;color:#ececec;letter-spacing:1.703px;left:1986px;-webkit-text-stroke:0.4px #ececec;">2024</div>
<div class="t" style="top:317.18px;font-size:24px;line-height:24px;color:#ececec;letter-spacing:1.463px;left:2186px;-webkit-text-stroke:0.4px #ececec;">5:18</div>
<div class="t" style="top:317.18px;font-size:24px;line-height:24px;color:#ececec;letter-spacing:2.356px;left:2286.5px;-webkit-text-stroke:0.4px #ececec;">20/11</div>
<div style="left:0px;top:368px;width:2354px;height:80px;background:#121218;"></div>
<div style="left:108px;top:375.9px;width:64px;height:6px;background:#f6f6f6;"></div>
<svg style="left:187px;top:377.4px;" width="186" height="3" viewBox="0 0 186 3"><rect x="0.75" y="0" width="2.6" height="2.6" fill="#6f7a4a" opacity="0.75"/><rect x="5.34" y="0" width="2.6" height="2.6" fill="#7a6a48" opacity="0.75"/><rect x="9.93" y="0" width="2.6" height="2.6" fill="#5c7a52" opacity="0.75"/><rect x="14.52" y="0" width="2.6" height="2.6" fill="#7a5a46" opacity="0.75"/><rect x="19.11" y="0" width="2.6" height="2.6" fill="#6f7a4a" opacity="0.75"/><rect x="23.70" y="0" width="2.6" height="2.6" fill="#7a6a48" opacity="0.75"/><rect x="28.29" y="0" width="2.6" height="2.6" fill="#5c7a52" opacity="0.75"/><rect x="32.88" y="0" width="2.6" height="2.6" fill="#7a5a46" opacity="0.75"/><rect x="37.47" y="0" width="2.6" height="2.6" fill="#6f7a4a" opacity="0.75"/><rect x="46.65" y="0" width="2.6" height="2.6" fill="#5c7a52" opacity="0.75"/><rect x="51.24" y="0" width="2.6" height="2.6" fill="#7a5a46" opacity="0.75"/><rect x="55.83" y="0" width="2.6" height="2.6" fill="#6f7a4a" opacity="0.75"/><rect x="60.42" y="0" width="2.6" height="2.6" fill="#7a6a48" opacity="0.75"/><rect x="65.01" y="0" width="2.6" height="2.6" fill="#5c7a52" opacity="0.75"/><rect x="69.60" y="0" width="2.6" height="2.6" fill="#7a5a46" opacity="0.75"/><rect x="74.19" y="0" width="2.6" height="2.6" fill="#6f7a4a" opacity="0.75"/><rect x="78.78" y="0" width="2.6" height="2.6" fill="#7a6a48" opacity="0.75"/><rect x="83.37" y="0" width="2.6" height="2.6" fill="#5c7a52" opacity="0.75"/><rect x="101.73" y="0" width="2.6" height="2.6" fill="#5c7a52" opacity="0.75"/><rect x="106.32" y="0" width="2.6" height="2.6" fill="#7a5a46" opacity="0.75"/><rect x="110.91" y="0" width="2.6" height="2.6" fill="#6f7a4a" opacity="0.75"/><rect x="115.50" y="0" width="2.6" height="2.6" fill="#7a6a48" opacity="0.75"/><rect x="120.09" y="0" width="2.6" height="2.6" fill="#5c7a52" opacity="0.75"/><rect x="124.68" y="0" width="2.6" height="2.6" fill="#7a5a46" opacity="0.75"/><rect x="129.27" y="0" width="2.6" height="2.6" fill="#6f7a4a" opacity="0.75"/><rect x="133.86" y="0" width="2.6" height="2.6" fill="#7a6a48" opacity="0.75"/><rect x="138.45" y="0" width="2.6" height="2.6" fill="#5c7a52" opacity="0.75"/><rect x="143.04" y="0" width="2.6" height="2.6" fill="#7a5a46" opacity="0.75"/><rect x="147.63" y="0" width="2.6" height="2.6" fill="#6f7a4a" opacity="0.75"/><rect x="152.22" y="0" width="2.6" height="2.6" fill="#7a6a48" opacity="0.75"/><rect x="156.81" y="0" width="2.6" height="2.6" fill="#5c7a52" opacity="0.75"/><rect x="161.40" y="0" width="2.6" height="2.6" fill="#7a5a46" opacity="0.75"/><rect x="165.99" y="0" width="2.6" height="2.6" fill="#6f7a4a" opacity="0.75"/><rect x="170.58" y="0" width="2.6" height="2.6" fill="#7a6a48" opacity="0.75"/><rect x="175.17" y="0" width="2.6" height="2.6" fill="#5c7a52" opacity="0.75"/><rect x="179.76" y="0" width="2.6" height="2.6" fill="#7a5a46" opacity="0.75"/></svg>
<div style="left:0px;top:381.5px;width:2369.5px;height:30px;background:#131318;"></div>
<div style="left:2354px;top:48px;width:16px;height:360px;background:#121218;"></div>
<div style="left:2px;top:382px;width:2236px;height:11.9px;background:#5c5c66;border-radius:6px;"></div>
<div style="left:2356px;top:68.2px;width:12px;height:27.8px;background:#5e5e68;border-radius:6px;"></div>
</div>
<div style="left:12px;top:1818.5px;width:3000px;height:60.5px;background:#1e1e26;"></div>
<div class="t" style="top:1835.39px;font-size:26.5px;line-height:26.5px;color:#b8b8c0;letter-spacing:-0.9px;left:38px;-webkit-text-stroke:0.3px #b8b8c0;">Ready</div>
<div style="left:2844px;top:1830.5px;width:160.5px;height:41px;background:#35202a;border-radius:9px;"></div>
<div class="t" style="top:1843.60px;font-size:17px;line-height:17px;color:#e04848;font-weight:700;letter-spacing:-0.2px;left:2924px;transform:translateX(-50%);">DEBUG</div>
</div></body></html>
